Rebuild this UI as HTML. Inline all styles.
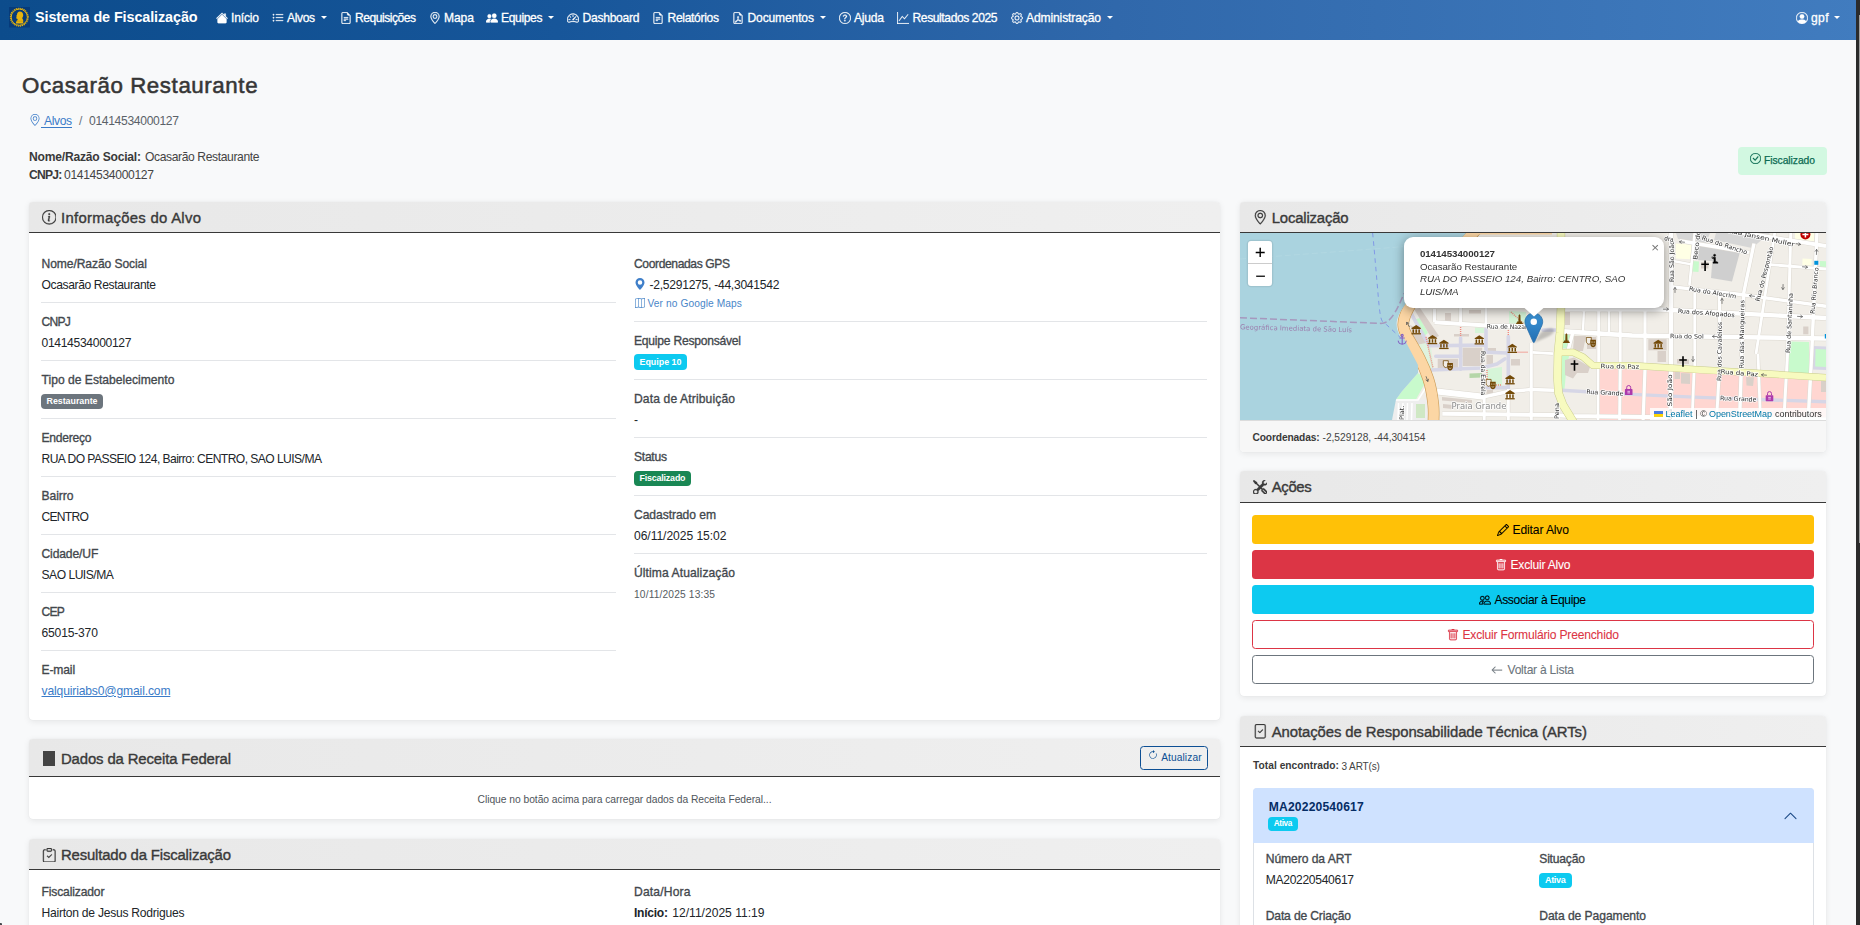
<!DOCTYPE html>
<html lang="pt-BR">
<head>
<meta charset="utf-8">
<meta name="viewport" content="width=device-width, initial-scale=1">
<title>Ocasarão Restaurante - Sistema de Fiscalização</title>
<style>

*{box-sizing:border-box}
html,body{margin:0;padding:0}
body{position:relative;width:1860px;height:925px;overflow:hidden;background:#f8f9fa;
  font-family:"Liberation Sans",sans-serif;font-size:12px;color:#212529}
.a{position:absolute;display:block}
.t{white-space:pre;margin:0;padding:0;font-weight:400}
a{color:#3a7bc8}
.navbar{left:0;top:0;width:1860px;height:39.5px;background:linear-gradient(90deg,#0c4c8c 0%,#17569a 30%,#3068ab 60%,#417cbf 100%);color:#fff}
.navbar .t{color:#fff;text-decoration:none}
.caret{width:0;height:0;border-left:3.4px solid transparent;border-right:3.4px solid transparent;border-top:3.6px solid #fff}
main{left:0;top:0;width:1856px;height:925px}
.card{background:#fff;border-radius:4px;box-shadow:0 1.5px 6px rgba(0,0,0,.075),0 0 1px rgba(0,0,0,.10);overflow:hidden}
.card-header{left:0;top:0;width:100%;background:linear-gradient(90deg,#e8e8e8,#efefef);border-bottom:1px solid #383838}
.sep{height:1px;background:#e3e5e8}
.badge{border-radius:4px;color:#fff}
.lbl{color:#43484d}
.sb1{-webkit-text-stroke:.33px currentColor}
.sbn{-webkit-text-stroke:.28px currentColor}
.sbb{-webkit-text-stroke:.08px currentColor}
.sb2{-webkit-text-stroke:.38px currentColor}
.sb3{-webkit-text-stroke:.55px currentColor}
.btn{border-radius:3.5px}
.scrollbar{left:1856px;top:0;width:4px;height:925px;background:#2b2b2b}
.thumb{left:1859px;top:15px;width:1px;height:528px;background:#9f9f9f}

</style>
</head>
<body>
<nav class="a navbar">
<svg class="a" style="left:9.2px;top:7.3px;width:21px;height:20.5px" viewBox="0 0 21 20.5" aria-hidden="true"><rect width="21" height="20.5" fill="#063b7b"/><circle cx="10.3" cy="10.2" r="8.9" fill="none" stroke="#e6b40e" stroke-width="1.1" stroke-dasharray="1.25 0.75"/><circle cx="10.3" cy="10.2" r="8.1" fill="none" stroke="#e6b40e" stroke-width="1"/><path d="M10.8 4.500c2.200 0 3.400 1.600 3.400 3.600 0 1.400-.5 2.300-1 3 .2.900.6 1.400 1 2v3.500H7c-.2-1.600.6-3 1.800-3.600-.3-.5-.5-.9-.6-1.300-.6 0-1-.4-.9-1l.3-1.200c-.3-.3-.3-.6-.1-.9l.5-.8c0-2 1.200-3.300 2.800-3.300z" fill="#e6b40e"/><path d="M7 14.200h7.200" stroke="#b88c06" stroke-width=".5"/></svg>
<a class="a t brand" href="#" style="left:35px;top:6.01px;font-size:14.4px;line-height:22px;font-weight:700;letter-spacing:-0.1px;">Sistema de Fiscalização</a>
<svg class="a ic" style="left:215.5px;top:12px;width:12px;height:12px;fill:#fff;stroke:#fff;stroke-width:.35" viewBox="0 0 16 16" aria-hidden="true"><path d="M8.707 1.5a1 1 0 0 0-1.414 0L.646 8.146a.5.5 0 0 0 .708.708L8 2.207l6.646 6.647a.5.5 0 0 0 .708-.708L13 5.793V2.5a.5.5 0 0 0-.5-.5h-1a.5.5 0 0 0-.5.5v1.293z"/><path d="m8 3.293 6 6V13.5a1.5 1.5 0 0 1-1.5 1.5h-9A1.5 1.5 0 0 1 2 13.5V9.293z"/></svg>
<a class="a t sbn" href="#" style="left:231px;top:8.81px;font-size:12.1px;line-height:18px;letter-spacing:-0.18px;">Início</a>
<svg class="a ic" style="left:271.5px;top:12px;width:12px;height:12px;fill:#fff;stroke:#fff;stroke-width:.35" viewBox="0 0 16 16" aria-hidden="true"><path fill-rule="evenodd" d="M5 11.5a.5.5 0 0 1 .5-.5h9a.5.5 0 0 1 0 1h-9a.5.5 0 0 1-.5-.5m0-4a.5.5 0 0 1 .5-.5h9a.5.5 0 0 1 0 1h-9a.5.5 0 0 1-.5-.5m0-4a.5.5 0 0 1 .5-.5h9a.5.5 0 0 1 0 1h-9a.5.5 0 0 1-.5-.5m-3 1a1 1 0 1 0 0-2 1 1 0 0 0 0 2m0 4a1 1 0 1 0 0-2 1 1 0 0 0 0 2m0 4a1 1 0 1 0 0-2 1 1 0 0 0 0 2"/></svg>
<a class="a t sbn" href="#" style="left:287px;top:8.81px;font-size:12.1px;line-height:18px;letter-spacing:-0.39px;">Alvos</a>
<span class="a caret" style="left:320.6px;top:15.8px;width:0px;height:0px;"></span>
<svg class="a ic" style="left:339.5px;top:12px;width:12px;height:12px;fill:#fff;stroke:#fff;stroke-width:.35" viewBox="0 0 16 16" aria-hidden="true"><path d="M5.5 7a.5.5 0 0 0 0 1h5a.5.5 0 0 0 0-1zM5 9.5a.5.5 0 0 1 .5-.5h5a.5.5 0 0 1 0 1h-5a.5.5 0 0 1-.5-.5m0 2a.5.5 0 0 1 .5-.5h2a.5.5 0 0 1 0 1h-2a.5.5 0 0 1-.5-.5"/><path d="M9.5 0H4a2 2 0 0 0-2 2v12a2 2 0 0 0 2 2h8a2 2 0 0 0 2-2V4.5zm0 1v2A1.5 1.5 0 0 0 11 4.5h2V14a1 1 0 0 1-1 1H4a1 1 0 0 1-1-1V2a1 1 0 0 1 1-1z"/></svg>
<a class="a t sbn" href="#" style="left:355px;top:8.81px;font-size:12.1px;line-height:18px;letter-spacing:-0.49px;">Requisições</a>
<svg class="a ic" style="left:428.5px;top:12px;width:12px;height:12px;fill:#fff;stroke:#fff;stroke-width:.35" viewBox="0 0 16 16" aria-hidden="true"><path d="M12.166 8.94c-.524 1.062-1.234 2.12-1.96 3.07A32 32 0 0 1 8 14.58a32 32 0 0 1-2.206-2.57c-.726-.95-1.436-2.008-1.96-3.07C3.304 7.867 3 6.862 3 6a5 5 0 0 1 10 0c0 .862-.305 1.867-.834 2.94M8 16s6-5.686 6-10A6 6 0 0 0 2 6c0 4.314 6 10 6 10"/><path d="M8 8a2 2 0 1 1 0-4 2 2 0 0 1 0 4m0 1a3 3 0 1 0 0-6 3 3 0 0 0 0 6"/></svg>
<a class="a t sbn" href="#" style="left:444px;top:8.81px;font-size:12.1px;line-height:18px;letter-spacing:-0.09px;">Mapa</a>
<svg class="a ic" style="left:485.5px;top:12px;width:12px;height:12px;fill:#fff;stroke:#fff;stroke-width:.35" viewBox="0 0 16 16" aria-hidden="true"><path d="M7 14s-1 0-1-1 1-4 5-4 5 3 5 4-1 1-1 1zm4-6a3 3 0 1 0 0-6 3 3 0 0 0 0 6m-5.784 6A2.24 2.24 0 0 1 5 13c0-1.355.68-2.75 1.936-3.72A6.3 6.3 0 0 0 5 9c-4 0-5 3-5 4s1 1 1 1zM4.5 8a2.5 2.5 0 1 0 0-5 2.5 2.5 0 0 0 0 5"/></svg>
<a class="a t sbn" href="#" style="left:501px;top:8.81px;font-size:12.1px;line-height:18px;letter-spacing:-0.37px;">Equipes</a>
<span class="a caret" style="left:548.1px;top:15.8px;width:0px;height:0px;"></span>
<svg class="a ic" style="left:567px;top:12px;width:12px;height:12px;fill:#fff;stroke:#fff;stroke-width:.35" viewBox="0 0 16 16" aria-hidden="true"><path d="M8 4a.5.5 0 0 1 .5.5V6a.5.5 0 0 1-1 0V4.5A.5.5 0 0 1 8 4M3.732 5.732a.5.5 0 0 1 .707 0l.915.914a.5.5 0 1 1-.708.708l-.914-.915a.5.5 0 0 1 0-.707M2 10a.5.5 0 0 1 .5-.5h1.586a.5.5 0 0 1 0 1H2.5A.5.5 0 0 1 2 10m9.5 0a.5.5 0 0 1 .5-.5h1.5a.5.5 0 0 1 0 1H12a.5.5 0 0 1-.5-.5m.754-4.246a.39.39 0 0 0-.527-.02L7.547 9.31a.91.91 0 1 0 1.302 1.258l3.434-4.297a.39.39 0 0 0-.029-.518z"/><path fill-rule="evenodd" d="M0 10a8 8 0 1 1 15.547 2.661c-.442 1.253-1.845 1.602-2.932 1.25C11.309 13.488 9.475 13 8 13c-1.474 0-3.31.488-4.615.911-1.087.352-2.49.003-2.932-1.25A8 8 0 0 1 0 10m8-7a7 7 0 0 0-6.603 9.329c.203.575.923.876 1.68.63C4.397 12.533 6.358 12 8 12s3.604.532 4.923.96c.757.245 1.477-.056 1.68-.631A7 7 0 0 0 8 3"/></svg>
<a class="a t sbn" href="#" style="left:582.5px;top:8.81px;font-size:12.1px;line-height:18px;letter-spacing:-0.27px;">Dashboard</a>
<svg class="a ic" style="left:652px;top:12px;width:12px;height:12px;fill:#fff;stroke:#fff;stroke-width:.35" viewBox="0 0 16 16" aria-hidden="true"><path d="M5.5 7a.5.5 0 0 0 0 1h5a.5.5 0 0 0 0-1zM5 9.5a.5.5 0 0 1 .5-.5h5a.5.5 0 0 1 0 1h-5a.5.5 0 0 1-.5-.5m0 2a.5.5 0 0 1 .5-.5h2a.5.5 0 0 1 0 1h-2a.5.5 0 0 1-.5-.5"/><path d="M9.5 0H4a2 2 0 0 0-2 2v12a2 2 0 0 0 2 2h8a2 2 0 0 0 2-2V4.5zm0 1v2A1.5 1.5 0 0 0 11 4.5h2V14a1 1 0 0 1-1 1H4a1 1 0 0 1-1-1V2a1 1 0 0 1 1-1z"/></svg>
<a class="a t sbn" href="#" style="left:667.5px;top:8.81px;font-size:12.1px;line-height:18px;letter-spacing:-0.33px;">Relatórios</a>
<svg class="a ic" style="left:732px;top:12px;width:12px;height:12px;fill:#fff;stroke:#fff;stroke-width:.35" viewBox="0 0 16 16" aria-hidden="true"><path d="M14 14V4.5L9.5 0H4a2 2 0 0 0-2 2v12a2 2 0 0 0 2 2h8a2 2 0 0 0 2-2M9.5 3A1.5 1.5 0 0 0 11 4.5h2V14a1 1 0 0 1-1 1H4a1 1 0 0 1-1-1V2a1 1 0 0 1 1-1h5.5z"/><path d="M4.6 14.1a.8.8 0 0 1-.44-.42c-.2-.39-.13-.78.08-1.1.2-.31.53-.57.9-.79a7.7 7.7 0 0 1 1.48-.65 20 20 0 0 0 1.06-2.22 7.3 7.3 0 0 1-.43-1.3c-.09-.4-.12-.8-.05-1.14.08-.35.28-.67.65-.82.2-.08.4-.12.6-.08a.7.7 0 0 1 .48.37c.09.16.12.36.13.54 0 .19-.01.4-.05.61-.08.51-.27 1.13-.52 1.8a11 11 0 0 0 .98 1.68 5.8 5.8 0 0 1 1.33.05c.37.07.74.2.96.47.12.14.2.32.2.52 0 .19-.05.38-.14.56a1 1 0 0 1-.35.42.9.9 0 0 1-.51.14c-.33-.02-.65-.2-.93-.42a5.7 5.7 0 0 1-.91-.95 11.7 11.7 0 0 0-2 .4 11.3 11.3 0 0 1-1.02 1.52c-.3.35-.61.65-.93.78a.8.8 0 0 1-.58.03m1.38-2.35c-.17.08-.32.16-.46.24-.33.2-.54.38-.65.55-.1.15-.1.25-.04.36l.03.05.06-.02c.14-.06.36-.24.64-.57a8 8 0 0 0 .42-.61m1.64-1.33a13 13 0 0 1 1.01-.19 10 10 0 0 1-.51-.86 21 21 0 0 1-.5 1.05m2.45.45c.15.16.3.3.43.4.25.2.42.26.51.27a.1.1 0 0 0 .07-.02.3.3 0 0 0 .1-.12.6.6 0 0 0 .06-.2.1.1 0 0 0-.03-.06c-.05-.06-.2-.15-.5-.2a4 4 0 0 0-.64-.07M8.08 7.85c.13-.43.22-.8.27-1.1.03-.2.04-.35.04-.47a.6.6 0 0 0-.03-.2.5.5 0 0 0-.15.04c-.09.03-.16.1-.19.27-.04.18-.03.43.04.75.02.1.05.2.02.71"/></svg>
<a class="a t sbn" href="#" style="left:747.5px;top:8.81px;font-size:12.1px;line-height:18px;letter-spacing:-0.16px;">Documentos</a>
<span class="a caret" style="left:819.6px;top:15.8px;width:0px;height:0px;"></span>
<svg class="a ic" style="left:838.5px;top:12px;width:12px;height:12px;fill:#fff;stroke:#fff;stroke-width:.35" viewBox="0 0 16 16" aria-hidden="true"><path d="M8 15A7 7 0 1 1 8 1a7 7 0 0 1 0 14m0 1A8 8 0 1 0 8 0a8 8 0 0 0 0 16"/><path d="M5.255 5.786a.237.237 0 0 0 .241.247h.825c.138 0 .248-.113.266-.25.09-.656.54-1.134 1.342-1.134.686 0 1.314.343 1.314 1.168 0 .635-.374.927-.965 1.371-.673.489-1.206 1.06-1.168 1.987l.003.217a.25.25 0 0 0 .25.246h.811a.25.25 0 0 0 .25-.25v-.105c0-.718.273-.927 1.01-1.486.609-.463 1.244-.977 1.244-2.056 0-1.511-1.276-2.241-2.673-2.241-1.267 0-2.655.59-2.75 2.286m1.557 5.763c0 .533.425.927 1.01.927.609 0 1.028-.394 1.028-.927 0-.552-.42-.94-1.029-.94-.584 0-1.009.388-1.009.94"/></svg>
<a class="a t sbn" href="#" style="left:854px;top:8.81px;font-size:12.1px;line-height:18px;letter-spacing:-0.23px;">Ajuda</a>
<svg class="a ic" style="left:897px;top:12px;width:12px;height:12px;fill:#fff;stroke:#fff;stroke-width:.35" viewBox="0 0 16 16" aria-hidden="true"><path fill-rule="evenodd" d="M0 0h1v15h15v1H0zm14.817 3.113a.5.5 0 0 1 .07.704l-4.5 5.5a.5.5 0 0 1-.74.037L7.06 6.767l-3.656 5.027a.5.5 0 0 1-.808-.588l4-5.5a.5.5 0 0 1 .758-.06l2.609 2.61 4.15-5.073a.5.5 0 0 1 .704-.07"/></svg>
<a class="a t sbn" href="#" style="left:912.5px;top:8.81px;font-size:12.1px;line-height:18px;letter-spacing:-0.41px;">Resultados 2025</a>
<svg class="a ic" style="left:1010.5px;top:12px;width:12px;height:12px;fill:#fff;stroke:#fff;stroke-width:.35" viewBox="0 0 16 16" aria-hidden="true"><path d="M8 4.754a3.246 3.246 0 1 0 0 6.492 3.246 3.246 0 0 0 0-6.492M5.754 8a2.246 2.246 0 1 1 4.492 0 2.246 2.246 0 0 1-4.492 0"/><path d="M9.796 1.343c-.527-1.79-3.065-1.79-3.592 0l-.094.319a.873.873 0 0 1-1.255.52l-.292-.16c-1.64-.892-3.433.902-2.54 2.541l.159.292a.873.873 0 0 1-.52 1.255l-.319.094c-1.79.527-1.79 3.065 0 3.592l.319.094a.873.873 0 0 1 .52 1.255l-.16.292c-.892 1.64.901 3.434 2.541 2.54l.292-.159a.873.873 0 0 1 1.255.52l.094.319c.527 1.79 3.065 1.79 3.592 0l.094-.319a.873.873 0 0 1 1.255-.52l.292.16c1.64.893 3.434-.902 2.54-2.541l-.159-.292a.873.873 0 0 1 .52-1.255l.319-.094c1.79-.527 1.79-3.065 0-3.592l-.319-.094a.873.873 0 0 1-.52-1.255l.16-.292c.893-1.64-.902-3.433-2.541-2.54l-.292.159a.873.873 0 0 1-1.255-.52zm-2.633.283c.246-.835 1.428-.835 1.674 0l.094.319a1.873 1.873 0 0 0 2.693 1.115l.291-.16c.764-.415 1.6.42 1.184 1.185l-.159.292a1.873 1.873 0 0 0 1.116 2.692l.318.094c.835.246.835 1.428 0 1.674l-.319.094a1.873 1.873 0 0 0-1.115 2.693l.16.291c.415.764-.42 1.6-1.185 1.184l-.291-.159a1.873 1.873 0 0 0-2.693 1.116l-.094.318c-.246.835-1.428.835-1.674 0l-.094-.319a1.873 1.873 0 0 0-2.692-1.115l-.292.16c-.764.415-1.6-.42-1.184-1.185l.159-.291A1.873 1.873 0 0 0 1.945 8.93l-.319-.094c-.835-.246-.835-1.428 0-1.674l.319-.094A1.873 1.873 0 0 0 3.06 4.377l-.16-.292c-.415-.764.42-1.6 1.185-1.184l.292.159a1.873 1.873 0 0 0 2.692-1.115z"/></svg>
<a class="a t sbn" href="#" style="left:1026px;top:8.81px;font-size:12.1px;line-height:18px;letter-spacing:-0.14px;">Administração</a>
<span class="a caret" style="left:1106.6px;top:15.8px;width:0px;height:0px;"></span>
<svg class="a ic" style="left:1795.5px;top:12px;width:12px;height:12px;fill:#fff;stroke:#fff;stroke-width:.35" viewBox="0 0 16 16" aria-hidden="true"><path d="M11 6a3 3 0 1 1-6 0 3 3 0 0 1 6 0"/><path fill-rule="evenodd" d="M0 8a8 8 0 1 1 16 0A8 8 0 0 1 0 8m8-7a7 7 0 0 0-5.468 11.37C3.242 11.226 4.805 10 8 10s4.757 1.225 5.468 2.37A7 7 0 0 0 8 1"/></svg>
<a class="a t sbn" href="#" style="left:1811px;top:8.81px;font-size:12.1px;line-height:18px;letter-spacing:0.39px;">gpf</a>
<span class="a caret" style="left:1834.2px;top:15.8px;width:0px;height:0px;"></span>
</nav>
<main class="a">
<h1 class="a t sb3" style="left:22px;top:71.37px;font-size:22.3px;line-height:30px;letter-spacing:0.59px;color:#363636;">Ocasarão Restaurante</h1>
<nav class="a" style="left:0;top:0" aria-label="breadcrumb">
<svg class="a ic" style="left:28.5px;top:113.5px;width:12px;height:12px;fill:#3a7bc8;" viewBox="0 0 16 16" aria-hidden="true"><path d="M12.166 8.94c-.524 1.062-1.234 2.12-1.96 3.07A32 32 0 0 1 8 14.58a32 32 0 0 1-2.206-2.57c-.726-.95-1.436-2.008-1.96-3.07C3.304 7.867 3 6.862 3 6a5 5 0 0 1 10 0c0 .862-.305 1.867-.834 2.94M8 16s6-5.686 6-10A6 6 0 0 0 2 6c0 4.314 6 10 6 10"/><path d="M8 8a2 2 0 1 1 0-4 2 2 0 0 1 0 4m0 1a3 3 0 1 0 0-6 3 3 0 0 0 0 6"/></svg>
<a class="a t" href="#" style="left:44px;top:111.81px;font-size:12.1px;line-height:18px;letter-spacing:-0.39px;color:#3a7bc8;text-decoration:none">Alvos</a>
<div class="a " style="left:40.5px;top:126.6px;width:31.5px;height:1px;background:#3a7bc8"></div>
<span class="a t" style="left:79px;top:111.81px;font-size:12.1px;line-height:18px;color:#6c757d;">/</span>
<span class="a t" style="left:89px;top:111.81px;font-size:12.1px;line-height:18px;letter-spacing:-0.32px;color:#5b6268;">01414534000127</span>
</nav>
<span class="a t" style="left:29px;top:147.81px;font-size:12.1px;line-height:18px;font-weight:700;letter-spacing:-0.21px;color:#3a3a3a;">Nome/Razão Social:</span>
<span class="a t" style="left:145px;top:147.81px;font-size:12.1px;line-height:18px;letter-spacing:-0.38px;color:#444;">Ocasarão Restaurante</span>
<span class="a t" style="left:29px;top:165.81px;font-size:12.1px;line-height:18px;font-weight:700;letter-spacing:-0.75px;color:#3a3a3a;">CNPJ:</span>
<span class="a t" style="left:64px;top:165.81px;font-size:12.1px;line-height:18px;letter-spacing:-0.32px;color:#444;">01414534000127</span>
<div class="a " style="left:1738px;top:147px;width:89px;height:28px;background:#d2f8e1;border-radius:4px"></div>
<svg class="a ic" style="left:1750px;top:153.4px;width:11px;height:11px;fill:#0b6b52;stroke:#0b6b52;stroke-width:.3" viewBox="0 0 16 16" aria-hidden="true"><path d="M8 15A7 7 0 1 1 8 1a7 7 0 0 1 0 14m0 1A8 8 0 1 0 8 0a8 8 0 0 0 0 16"/><path d="m10.97 4.97-.02.022-3.473 4.425-2.093-2.094a.75.75 0 0 0-1.06 1.06L6.97 11.03a.75.75 0 0 0 1.079-.02l3.992-4.99a.75.75 0 0 0-1.071-1.05"/></svg>
<span class="a t" style="left:1764px;top:152.63px;font-size:10.3px;line-height:15px;letter-spacing:-0.05px;color:#0b6b52;-webkit-text-stroke:.25px #0b6b52">Fiscalizado</span>
<section class="a card" style="left:29px;top:201.5px;width:1191px;height:518.5px">
<div class="a card-header" style="height:31.5px"></div>
<svg class="a ic" style="left:12.5px;top:8.5px;width:14.5px;height:14.5px;fill:#3a3a3a;stroke:#3a3a3a;stroke-width:.3" viewBox="0 0 16 16" aria-hidden="true"><path d="M8 15A7 7 0 1 1 8 1a7 7 0 0 1 0 14m0 1A8 8 0 1 0 8 0a8 8 0 0 0 0 16"/><path d="m8.93 6.588-2.29.287-.082.38.45.083c.294.07.352.176.288.469l-.738 3.468c-.194.897.105 1.319.808 1.319.545 0 1.178-.252 1.465-.598l.088-.416c-.2.176-.492.246-.686.246-.275 0-.375-.193-.304-.533zM9 4.5a1 1 0 1 1-2 0 1 1 0 0 1 2 0"/></svg>
<h5 class="a t sb2" style="left:32px;top:6.34px;font-size:14.9px;line-height:20px;letter-spacing:0.28px;color:#3a3a3a;">Informações do Alvo</h5>
<span class="a t lbl sb1" style="left:12.5px;top:53.31px;font-size:12.1px;line-height:18px;letter-spacing:-0.09px;">Nome/Razão Social</span>
<span class="a t" style="left:12.5px;top:74.31px;font-size:12.1px;line-height:18px;letter-spacing:-0.38px;">Ocasarão Restaurante</span>
<div class="a sep" style="left:12px;top:100.5px;width:575px;height:1px;"></div>
<span class="a t lbl sb1" style="left:12.5px;top:111.31px;font-size:12.1px;line-height:18px;letter-spacing:-0.75px;">CNPJ</span>
<span class="a t" style="left:12.5px;top:132.31px;font-size:12.1px;line-height:18px;letter-spacing:-0.32px;">01414534000127</span>
<div class="a sep" style="left:12px;top:158.5px;width:575px;height:1px;"></div>
<span class="a t lbl sb1" style="left:12.5px;top:169.31px;font-size:12.1px;line-height:18px;letter-spacing:0.01px;">Tipo de Estabelecimento</span>
<span class="a badge" style="left:12px;top:192.7px;width:62px;height:14.8px;background:#6c757d"></span><span class="a t" style="left:17.5px;top:192.72px;font-size:8.9px;line-height:15px;font-weight:700;letter-spacing:-0.03px;color:#fff;">Restaurante</span>
<div class="a sep" style="left:12px;top:216.5px;width:575px;height:1px;"></div>
<span class="a t lbl sb1" style="left:12.5px;top:227.31px;font-size:12.1px;line-height:18px;letter-spacing:-0.25px;">Endereço</span>
<span class="a t" style="left:12.5px;top:248.31px;font-size:12.1px;line-height:18px;letter-spacing:-0.56px;">RUA DO PASSEIO 124, Bairro: CENTRO, SAO LUIS/MA</span>
<div class="a sep" style="left:12px;top:274.5px;width:575px;height:1px;"></div>
<span class="a t lbl sb1" style="left:12.5px;top:285.31px;font-size:12.1px;line-height:18px;letter-spacing:-0.05px;">Bairro</span>
<span class="a t" style="left:12.5px;top:306.31px;font-size:12.1px;line-height:18px;letter-spacing:-0.75px;">CENTRO</span>
<div class="a sep" style="left:12px;top:332.5px;width:575px;height:1px;"></div>
<span class="a t lbl sb1" style="left:12.5px;top:343.31px;font-size:12.1px;line-height:18px;letter-spacing:-0.13px;">Cidade/UF</span>
<span class="a t" style="left:12.5px;top:364.31px;font-size:12.1px;line-height:18px;letter-spacing:-0.5px;">SAO LUIS/MA</span>
<div class="a sep" style="left:12px;top:390.5px;width:575px;height:1px;"></div>
<span class="a t lbl sb1" style="left:12.5px;top:401.31px;font-size:12.1px;line-height:18px;letter-spacing:-0.75px;">CEP</span>
<span class="a t" style="left:12.5px;top:422.31px;font-size:12.1px;line-height:18px;letter-spacing:-0.18px;">65015-370</span>
<div class="a sep" style="left:12px;top:448.5px;width:575px;height:1px;"></div>
<span class="a t lbl sb1" style="left:12.5px;top:459.31px;font-size:12.1px;line-height:18px;letter-spacing:-0.14px;">E-mail</span>
<a class="a t" href="#" style="left:12.5px;top:480.31px;font-size:12.1px;line-height:18px;letter-spacing:-0.14px;color:#3a7bc8;text-decoration:underline">valquiriabs0@gmail.com</a>
<span class="a t lbl sb1" style="left:605px;top:53.31px;font-size:12.1px;line-height:18px;letter-spacing:-0.39px;">Coordenadas GPS</span>
<svg class="a ic" style="left:604.5px;top:76.5px;width:12px;height:12px;fill:#3f7fc9;" viewBox="0 0 16 16" aria-hidden="true"><path d="M8 16s6-5.686 6-10A6 6 0 0 0 2 6c0 4.314 6 10 6 10m0-7a3 3 0 1 1 0-6 3 3 0 0 1 0 6"/></svg>
<span class="a t" style="left:620.5px;top:74.31px;font-size:12.1px;line-height:18px;letter-spacing:-0.27px;">-2,5291275, -44,3041542</span>
<svg class="a ic" style="left:605.5px;top:96px;width:10px;height:10px;fill:#4a86c8;" viewBox="0 0 16 16" aria-hidden="true"><path fill-rule="evenodd" d="M15.817.113A.5.5 0 0 1 16 .5v14a.5.5 0 0 1-.402.49l-5 1a.5.5 0 0 1-.196 0L5.5 15.01l-4.902.98A.5.5 0 0 1 0 15.5v-14a.5.5 0 0 1 .402-.49l5-1a.5.5 0 0 1 .196 0L10.5.99l4.902-.98a.5.5 0 0 1 .415.103M10 1.91l-4-.8v12.98l4 .8zm1 12.98 4-.8V1.11l-4 .8zm-6-.8V1.11l-4 .8v12.98z"/></svg>
<a class="a t" href="#" style="left:618.5px;top:94.97px;font-size:10.2px;line-height:15px;letter-spacing:0.09px;color:#4a86c8;text-decoration:none">Ver no Google Maps</a>
<div class="a sep" style="left:605px;top:119.5px;width:573px;height:1px;"></div>
<span class="a t lbl sb1" style="left:605px;top:130.31px;font-size:12.1px;line-height:18px;letter-spacing:-0.23px;">Equipe Responsável</span>
<span class="a badge" style="left:605px;top:152.7px;width:53px;height:15.6px;background:#0dcaf0"></span><span class="a t" style="left:610.5px;top:152.62px;font-size:8.9px;line-height:16px;font-weight:700;letter-spacing:0.01px;color:#fff;">Equipe 10</span>
<div class="a sep" style="left:605px;top:177.5px;width:573px;height:1px;"></div>
<span class="a t lbl sb1" style="left:605px;top:188.31px;font-size:12.1px;line-height:18px;letter-spacing:0.13px;">Data de Atribuição</span>
<span class="a t" style="left:605px;top:209.31px;font-size:12.1px;line-height:18px;">-</span>
<div class="a sep" style="left:605px;top:235.5px;width:573px;height:1px;"></div>
<span class="a t lbl sb1" style="left:605px;top:246.31px;font-size:12.1px;line-height:18px;letter-spacing:-0.26px;">Status</span>
<span class="a badge" style="left:605px;top:269.5px;width:57px;height:15px;background:#198754"></span><span class="a t" style="left:610.5px;top:269.62px;font-size:8.9px;line-height:15px;font-weight:700;letter-spacing:-0.18px;color:#fff;">Fiscalizado</span>
<div class="a sep" style="left:605px;top:293.5px;width:573px;height:1px;"></div>
<span class="a t lbl sb1" style="left:605px;top:304.31px;font-size:12.1px;line-height:18px;letter-spacing:-0.06px;">Cadastrado em</span>
<span class="a t" style="left:605px;top:325.31px;font-size:12.1px;line-height:18px;letter-spacing:-0.05px;">06/11/2025 15:02</span>
<div class="a sep" style="left:605px;top:351.5px;width:573px;height:1px;"></div>
<span class="a t lbl sb1" style="left:605px;top:362.31px;font-size:12.1px;line-height:18px;letter-spacing:0.09px;">Última Atualização</span>
<span class="a t" style="left:605px;top:385.47px;font-size:10.2px;line-height:15px;letter-spacing:0.16px;color:#555b61;">10/11/2025 13:35</span>
</section>
<section class="a card" style="left:29px;top:739.4px;width:1191px;height:79.4px">
<div class="a card-header" style="height:37.6px"></div>
<div class="a " style="left:14px;top:11.6px;width:12px;height:15px;background:#444"></div>
<h5 class="a t sb2" style="left:32px;top:9.44px;font-size:14.9px;line-height:20px;letter-spacing:-0.13px;color:#3a3a3a;">Dados da Receita Federal</h5>
<span class="a btn" style="left:1111px;top:6.6px;width:68px;height:24px;border:1px solid #0d4f94"></span>
<svg class="a ic" style="left:1119px;top:11.1px;width:10px;height:10px;fill:#0d4f94;" viewBox="0 0 16 16" aria-hidden="true"><path fill-rule="evenodd" d="M8 3a5 5 0 1 0 4.546 2.914.5.5 0 0 1 .908-.417A6 6 0 1 1 8 2z"/><path d="M8 4.466V.534a.25.25 0 0 1 .41-.192l2.36 1.966c.12.1.12.284 0 .384L8.410 4.658A.25.25 0 0 1 8 4.466"/></svg>
<span class="a t" style="left:1132.2px;top:10.27px;font-size:10.2px;line-height:15px;letter-spacing:0.09px;color:#0d4f94;">Atualizar</span>
<span class="a t" style="left:448.5px;top:52.33px;font-size:10.3px;line-height:15px;letter-spacing:-0.04px;color:#4f555b;">Clique no botão acima para carregar dados da Receita Federal...</span>
</section>
<section class="a card" style="left:29px;top:838.5px;width:1191px;height:120px">
<div class="a card-header" style="height:31.5px"></div>
<svg class="a ic" style="left:12.5px;top:9px;width:14.5px;height:14.5px;fill:#3a3a3a;stroke:#3a3a3a;stroke-width:.3" viewBox="0 0 16 16" aria-hidden="true"><path fill-rule="evenodd" d="M10.854 7.146a.5.5 0 0 1 0 .708l-3 3a.5.5 0 0 1-.708 0l-1.5-1.5a.5.5 0 1 1 .708-.708L7.5 9.793l2.646-2.647a.5.5 0 0 1 .708 0"/><path d="M4 1.5H3a2 2 0 0 0-2 2V14a2 2 0 0 0 2 2h10a2 2 0 0 0 2-2V3.5a2 2 0 0 0-2-2h-1v1h1a1 1 0 0 1 1 1V14a1 1 0 0 1-1 1H3a1 1 0 0 1-1-1V3.5a1 1 0 0 1 1-1h1z"/><path d="M9.5 1a.5.5 0 0 1 .5.5v1a.5.5 0 0 1-.5.5h-3a.5.5 0 0 1-.5-.5v-1a.5.5 0 0 1 .5-.5zm-3-1A1.5 1.5 0 0 0 5 1.5v1A1.5 1.5 0 0 0 6.500 4h3A1.5 1.5 0 0 0 11 2.5v-1A1.5 1.5 0 0 0 9.5 0z"/></svg>
<h5 class="a t sb2" style="left:32px;top:6.34px;font-size:14.9px;line-height:20px;letter-spacing:-0.16px;color:#3a3a3a;">Resultado da Fiscalização</h5>
<span class="a t lbl sb1" style="left:12.5px;top:44.31px;font-size:12.1px;line-height:18px;letter-spacing:-0.14px;">Fiscalizador</span>
<span class="a t" style="left:12.5px;top:65.31px;font-size:12.1px;line-height:18px;letter-spacing:-0.25px;">Hairton de Jesus Rodrigues</span>
<span class="a t lbl sb1" style="left:605px;top:44.31px;font-size:12.1px;line-height:18px;letter-spacing:0.17px;">Data/Hora</span>
<span class="a t" style="left:605px;top:65.31px;font-size:12.1px;line-height:18px;font-weight:700;letter-spacing:-0.27px;">Início:</span>
<span class="a t" style="left:643.3px;top:65.31px;font-size:12.1px;line-height:18px;letter-spacing:-0.01px;">12/11/2025 11:19</span>
</section>
<section class="a card" style="left:1240px;top:201.5px;width:586px;height:250.5px">
<div class="a card-header" style="height:31.5px"></div>
<svg class="a ic" style="left:12.5px;top:8.5px;width:14.5px;height:14.5px;fill:#3a3a3a;stroke:#3a3a3a;stroke-width:.3" viewBox="0 0 16 16" aria-hidden="true"><path d="M12.166 8.94c-.524 1.062-1.234 2.12-1.96 3.07A32 32 0 0 1 8 14.58a32 32 0 0 1-2.206-2.57c-.726-.95-1.436-2.008-1.96-3.07C3.304 7.867 3 6.862 3 6a5 5 0 0 1 10 0c0 .862-.305 1.867-.834 2.94M8 16s6-5.686 6-10A6 6 0 0 0 2 6c0 4.314 6 10 6 10"/><path d="M8 8a2 2 0 1 1 0-4 2 2 0 0 1 0 4m0 1a3 3 0 1 0 0-6 3 3 0 0 0 0 6"/></svg>
<h5 class="a t sb2" style="left:31.7px;top:6.34px;font-size:14.9px;line-height:20px;letter-spacing:-0.17px;color:#3a3a3a;">Localização</h5>
<div class="a map" style="left:0px;top:31.5px;width:586px;height:187px;overflow:hidden;background:#aad3df;opacity:.999"><svg class="a" style="left:0;top:0" width="586" height="187" viewBox="0 0 586 187" aria-label="Mapa"><rect width="586" height="187" fill="#f1eee8"/><polygon points="358.0,134.0 392.0,136.5 460.0,139.0 520.0,143.0 586.0,148.5 586.0,187.0 358.0,187.0" fill="#ffd6d1" /><polygon points="548.8,108.5 569.0,109.0 569.0,140.5 548.5,139.0" fill="#c8facc" /><polygon points="573.0,113.0 586.0,113.5 586.0,137.0 572.5,136.5" fill="#d6d6e6" /><polygon points="575.5,116.0 586.0,116.5 586.0,134.0 575.2,133.5" fill="#c8facc" /><polygon points="455.3,11.8 499.8,19.6 492.0,48.4 471.0,45.1 472.3,28.1 453.3,26.8" fill="#cfcfcf" /><polygon points="436.0,0.0 470.0,0.0 466.0,10.0 438.0,6.0" fill="#d6d6d6" /><polygon points="476.0,0.0 530.0,0.0 512.0,15.0 474.0,7.0" fill="#d6d6d6" /><polygon points="435.7,10.5 451.4,11.5 451.0,26.2 435.7,25.5" fill="#ffffe5" /><polygon points="555.0,0.0 574.0,0.0 574.0,8.0 555.0,7.0" fill="#ffffe5" /><polygon points="562.5,25.5 571.7,26.0 571.5,32.7 562.3,32.2" fill="#ffffe5" /><polygon points="452.0,28.0 459.0,28.5 458.5,39.0 451.5,38.5" fill="#c8facc" /><polygon points="580.0,28.0 586.0,28.3 586.0,34.0 580.0,33.7" fill="#c8facc" /><polygon points="321.4,101.0 331.8,102.0 329.0,115.4 320.5,115.0" fill="#c8facc" /><polygon points="321.5,122.0 329.0,123.0 326.0,140.0 324.5,156.0 320.5,156.0 320.0,138.0" fill="#c8facc" /><polygon points="178.0,140.0 161.8,158.5 156.0,166.4 176.0,166.4 184.6,150.7 181.4,143.0" fill="#c8facc" /><polygon points="173.0,87.0 180.0,85.0 188.0,100.0 183.0,104.0" fill="#c8facc" /><polygon points="176.5,104.0 190.0,106.0 194.0,137.0 186.0,138.0" fill="#dff3df" /><polygon points="247.0,136.0 262.0,134.0 262.0,153.0 247.0,153.0" fill="#d6f5d8" /><polygon points="229.5,140.5 242.0,140.0 242.0,144.5 229.5,145.0" fill="#b5d6a8" /><polygon points="235.0,94.5 244.0,94.5 244.0,100.0 235.0,100.0" fill="#d6f5d8" /><polygon points="269.0,78.0 286.0,79.0 286.0,92.0 269.0,91.0" fill="#d6f5d8" /><polygon points="156.0,166.4 152.0,187.0 188.0,187.0 187.0,166.4" fill="#eeeeee" /><polyline points="158.5,170.0 158.0,187.0" fill="none" stroke="#fff" stroke-width="1.5" stroke-linecap="butt" stroke-linejoin="round" /><polyline points="163.0,170.0 162.5,187.0" fill="none" stroke="#fff" stroke-width="1.5" stroke-linecap="butt" stroke-linejoin="round" /><polyline points="167.5,170.0 167.0,187.0" fill="none" stroke="#fff" stroke-width="1.5" stroke-linecap="butt" stroke-linejoin="round" /><polyline points="172.0,170.0 171.5,187.0" fill="none" stroke="#fff" stroke-width="1.5" stroke-linecap="butt" stroke-linejoin="round" /><polygon points="176.0,171.0 185.0,171.0 185.0,185.0 176.0,185.0" fill="#cfe8c4" /><polyline points="155.5,167.0 178.0,167.0 185.0,156.0" fill="none" stroke="#fff" stroke-width="1.6" stroke-linecap="round" stroke-linejoin="round" /><polygon points="222.6,114.7 242.2,114.7 242.2,133.0 222.6,133.0" fill="#d9d0c9" /><polygon points="197.7,125.8 218.0,125.8 218.0,135.0 197.7,135.0" fill="#d9d0c9" /><polygon points="174.0,76.0 180.0,75.0 199.0,103.0 192.0,106.0" fill="#d9d0c9" /><polygon points="170.0,92.0 181.0,97.0 186.0,110.0 176.0,112.0" fill="#d9d0c9" /><polygon points="205.0,80.0 211.0,80.0 211.0,88.0 205.0,88.0" fill="#d9d0c9" /><polygon points="229.0,77.0 241.0,77.0 241.0,80.5 229.0,80.5" fill="#d9d0c9" /><polygon points="214.0,101.0 229.0,101.0 229.0,103.5 214.0,103.5" fill="#d9d0c9" /><polygon points="247.5,115.0 256.0,115.0 256.0,118.0 247.5,118.0" fill="#d9d0c9" /><polygon points="246.5,122.0 253.0,122.0 253.0,131.5 246.5,131.5" fill="#d9d0c9" /><polygon points="271.0,126.0 280.0,126.0 280.0,132.5 271.0,132.5" fill="#d9d0c9" /><polygon points="246.5,157.0 253.0,157.0 253.0,162.0 246.5,162.0" fill="#d9d0c9" /><polygon points="202.0,164.0 232.0,167.0 232.0,170.0 202.0,167.5" fill="#d9d0c9" /><polygon points="203.0,171.0 213.0,172.0 213.0,176.0 203.0,175.0" fill="#d9d0c9" /><polygon points="325.0,78.0 330.0,78.0 330.0,92.0 325.0,92.0" fill="#d9d0c9" /><polygon points="334.0,103.0 346.0,103.0 343.0,118.0 333.0,118.0" fill="#d9d0c9" /><polygon points="347.0,104.0 356.0,104.0 356.0,116.0 347.0,116.0" fill="#d9d0c9" /><polygon points="325.0,127.0 334.0,124.5 350.0,134.0 348.0,140.0 337.0,140.0 333.0,145.5 325.0,142.0" fill="#d9d0c9" /><polygon points="408.3,106.2 426.6,106.2 426.6,117.3 408.3,117.3" fill="#d9d0c9" /><polygon points="417.5,118.0 426.0,118.0 426.0,129.0 417.5,129.0" fill="#d9d0c9" /><polygon points="437.0,126.0 449.0,126.5 449.0,131.0 437.0,130.5" fill="#d9d0c9" /><polygon points="434.5,139.0 440.0,139.0 440.0,146.0 434.5,146.0" fill="#d9d0c9" /><polygon points="441.0,140.0 450.0,140.5 450.0,151.0 441.0,150.5" fill="#d9d0c9" /><polygon points="461.0,29.0 468.5,29.0 468.5,35.5 461.0,35.5" fill="#d9d0c9" /><polygon points="563.2,93.5 568.4,93.5 568.4,101.3 563.2,101.3" fill="#d9d0c9" /><polygon points="506.0,144.0 514.0,144.5 513.0,153.0 506.5,152.5" fill="#d9d0c9" /><polygon points="581.0,148.0 586.0,148.0 586.0,159.0 581.0,159.0" fill="#d9d0c9" /><polyline points="171.6,81.4 189.2,112.8 244.2,112.1" fill="none" stroke="#d6d6e6" stroke-width="3.6" stroke-linecap="round" stroke-linejoin="round" /><polyline points="220.6,105.0 220.6,136.3" fill="none" stroke="#d6d6e6" stroke-width="3.6" stroke-linecap="round" stroke-linejoin="round" /><polyline points="195.8,123.2 220.6,123.2" fill="none" stroke="#d6d6e6" stroke-width="3.6" stroke-linecap="round" stroke-linejoin="round" /><polyline points="191.8,137.0 241.5,135.0 257.0,131.0 265.0,125.8" fill="none" stroke="#d6d6e6" stroke-width="3.6" stroke-linecap="round" stroke-linejoin="round" /><polyline points="246.0,95.0 246.0,119.0" fill="none" stroke="#d6d6e6" stroke-width="3.6" stroke-linecap="round" stroke-linejoin="round" /><polyline points="246.8,119.3 267.7,120.0" fill="none" stroke="#d6d6e6" stroke-width="3.6" stroke-linecap="round" stroke-linejoin="round" /><polyline points="268.3,103.6 268.3,156.0" fill="none" stroke="#d6d6e6" stroke-width="3.6" stroke-linecap="round" stroke-linejoin="round" /><polyline points="246.8,154.6 267.7,154.6" fill="none" stroke="#d6d6e6" stroke-width="3.6" stroke-linecap="round" stroke-linejoin="round" /><polyline points="303.0,97.0 317.0,97.0" fill="none" stroke="#d6d6e6" stroke-width="3.6" stroke-linecap="round" stroke-linejoin="round" /><polyline points="321.4,157.2 392.0,161.4 460.0,164.4 586.0,168.8" fill="none" stroke="#d6d6e6" stroke-width="3.4" stroke-linecap="butt" stroke-linejoin="round" /><polyline points="431.0,-2.0 431.0,121.0 430.6,190.0" fill="none" stroke="#dcd8d0" stroke-width="5.2" stroke-linecap="butt" stroke-linejoin="round" /><polyline points="454.7,0.0 449.4,52.0" fill="none" stroke="#dcd8d0" stroke-width="3.6" stroke-linecap="butt" stroke-linejoin="round" /><polyline points="454.7,60.0 454.7,134.0" fill="none" stroke="#dcd8d0" stroke-width="3.8" stroke-linecap="butt" stroke-linejoin="round" /><polyline points="454.0,140.0 452.0,190.0" fill="none" stroke="#dcd8d0" stroke-width="3.8" stroke-linecap="butt" stroke-linejoin="round" /><polyline points="479.5,61.5 479.5,136.0 476.3,190.0" fill="none" stroke="#dcd8d0" stroke-width="4.0" stroke-linecap="butt" stroke-linejoin="round" /><polyline points="514.0,10.5 503.7,60.0 501.7,121.0 499.5,190.0" fill="none" stroke="#dcd8d0" stroke-width="4.4" stroke-linecap="butt" stroke-linejoin="round" /><polyline points="535.0,-2.0 516.0,121.0" fill="none" stroke="#dcd8d0" stroke-width="3.8" stroke-linecap="butt" stroke-linejoin="round" /><polyline points="518.0,121.0 520.6,190.0" fill="none" stroke="#dcd8d0" stroke-width="3.8" stroke-linecap="butt" stroke-linejoin="round" /><polyline points="550.8,-2.0 547.5,121.0 543.7,190.0" fill="none" stroke="#dcd8d0" stroke-width="4.0" stroke-linecap="butt" stroke-linejoin="round" /><polyline points="577.0,-2.0 571.7,121.0 568.0,190.0" fill="none" stroke="#dcd8d0" stroke-width="4.4" stroke-linecap="butt" stroke-linejoin="round" /><polyline points="358.7,76.0 358.7,132.0" fill="none" stroke="#dcd8d0" stroke-width="4.0" stroke-linecap="butt" stroke-linejoin="round" /><polyline points="369.0,76.0 369.0,99.0" fill="none" stroke="#dcd8d0" stroke-width="3.4" stroke-linecap="butt" stroke-linejoin="round" /><polyline points="380.2,76.0 380.2,134.0 379.6,190.0" fill="none" stroke="#dcd8d0" stroke-width="4.0" stroke-linecap="butt" stroke-linejoin="round" /><polyline points="405.0,76.0 405.0,136.0 403.0,190.0" fill="none" stroke="#dcd8d0" stroke-width="4.2" stroke-linecap="butt" stroke-linejoin="round" /><polyline points="344.0,76.0 343.0,98.0" fill="none" stroke="#dcd8d0" stroke-width="3.4" stroke-linecap="butt" stroke-linejoin="round" /><polyline points="291.2,110.0 291.2,190.0" fill="none" stroke="#dcd8d0" stroke-width="4.2" stroke-linecap="butt" stroke-linejoin="round" /><polyline points="244.2,163.8 244.2,190.0" fill="none" stroke="#dcd8d0" stroke-width="4.0" stroke-linecap="butt" stroke-linejoin="round" /><polyline points="268.3,156.0 268.3,190.0" fill="none" stroke="#dcd8d0" stroke-width="4.0" stroke-linecap="butt" stroke-linejoin="round" /><polyline points="220.6,75.0 220.6,92.0" fill="none" stroke="#dcd8d0" stroke-width="4.0" stroke-linecap="butt" stroke-linejoin="round" /><polyline points="246.0,75.0 246.0,93.0" fill="none" stroke="#dcd8d0" stroke-width="4.0" stroke-linecap="butt" stroke-linejoin="round" /><polyline points="194.5,76.0 194.5,89.0" fill="none" stroke="#dcd8d0" stroke-width="4.0" stroke-linecap="butt" stroke-linejoin="round" /><polyline points="333.0,99.0 328.0,118.0" fill="none" stroke="#dcd8d0" stroke-width="4.4" stroke-linecap="butt" stroke-linejoin="round" /><polyline points="439.6,7.8 509.0,19.6" fill="none" stroke="#dcd8d0" stroke-width="4.6" stroke-linecap="butt" stroke-linejoin="round" /><polyline points="498.5,-1.0 586.0,13.0" fill="none" stroke="#dcd8d0" stroke-width="4.8" stroke-linecap="butt" stroke-linejoin="round" /><polyline points="433.0,28.0 451.4,31.4" fill="none" stroke="#dcd8d0" stroke-width="3.4" stroke-linecap="butt" stroke-linejoin="round" /><polyline points="527.0,31.4 586.0,36.0" fill="none" stroke="#dcd8d0" stroke-width="3.8" stroke-linecap="butt" stroke-linejoin="round" /><polyline points="430.5,53.6 501.0,61.5 586.0,73.2" fill="none" stroke="#dcd8d0" stroke-width="4.4" stroke-linecap="butt" stroke-linejoin="round" /><polyline points="324.0,76.2 420.0,76.5 586.0,85.0" fill="none" stroke="#dcd8d0" stroke-width="5.4" stroke-linecap="butt" stroke-linejoin="round" /><polyline points="322.7,98.4 392.0,102.5 586.0,105.5" fill="none" stroke="#dcd8d0" stroke-width="5.6" stroke-linecap="butt" stroke-linejoin="round" /><polyline points="194.5,89.2 246.8,92.5 284.7,93.2" fill="none" stroke="#dcd8d0" stroke-width="5.0" stroke-linecap="butt" stroke-linejoin="round" /><polyline points="292.5,119.3 313.0,120.6" fill="none" stroke="#dcd8d0" stroke-width="3.8" stroke-linecap="butt" stroke-linejoin="round" /><polyline points="290.0,156.5 314.0,157.2" fill="none" stroke="#dcd8d0" stroke-width="4.6" stroke-linecap="butt" stroke-linejoin="round" /><polyline points="197.0,158.5 244.0,163.8" fill="none" stroke="#dcd8d0" stroke-width="7.0" stroke-linecap="butt" stroke-linejoin="round" /><polyline points="244.0,163.8 268.0,158.5 291.0,156.5" fill="none" stroke="#dcd8d0" stroke-width="4.4" stroke-linecap="butt" stroke-linejoin="round" /><polyline points="202.3,180.8 313.5,182.0 330.0,183.0 586.0,186.5" fill="none" stroke="#dcd8d0" stroke-width="5.0" stroke-linecap="butt" stroke-linejoin="round" /><polyline points="358.0,136.0 358.0,187.0" fill="none" stroke="#dcd8d0" stroke-width="3.6" stroke-linecap="butt" stroke-linejoin="round" /><polyline points="431.0,-2.0 431.0,121.0 430.6,190.0" fill="none" stroke="#ffffff" stroke-width="4.2" stroke-linecap="butt" stroke-linejoin="round" /><polyline points="454.7,0.0 449.4,52.0" fill="none" stroke="#ffffff" stroke-width="2.6" stroke-linecap="butt" stroke-linejoin="round" /><polyline points="454.7,60.0 454.7,134.0" fill="none" stroke="#ffffff" stroke-width="2.8" stroke-linecap="butt" stroke-linejoin="round" /><polyline points="454.0,140.0 452.0,190.0" fill="none" stroke="#ffffff" stroke-width="2.8" stroke-linecap="butt" stroke-linejoin="round" /><polyline points="479.5,61.5 479.5,136.0 476.3,190.0" fill="none" stroke="#ffffff" stroke-width="3.0" stroke-linecap="butt" stroke-linejoin="round" /><polyline points="514.0,10.5 503.7,60.0 501.7,121.0 499.5,190.0" fill="none" stroke="#ffffff" stroke-width="3.4" stroke-linecap="butt" stroke-linejoin="round" /><polyline points="535.0,-2.0 516.0,121.0" fill="none" stroke="#ffffff" stroke-width="2.8" stroke-linecap="butt" stroke-linejoin="round" /><polyline points="518.0,121.0 520.6,190.0" fill="none" stroke="#ffffff" stroke-width="2.8" stroke-linecap="butt" stroke-linejoin="round" /><polyline points="550.8,-2.0 547.5,121.0 543.7,190.0" fill="none" stroke="#ffffff" stroke-width="3.0" stroke-linecap="butt" stroke-linejoin="round" /><polyline points="577.0,-2.0 571.7,121.0 568.0,190.0" fill="none" stroke="#ffffff" stroke-width="3.4" stroke-linecap="butt" stroke-linejoin="round" /><polyline points="358.7,76.0 358.7,132.0" fill="none" stroke="#ffffff" stroke-width="3.0" stroke-linecap="butt" stroke-linejoin="round" /><polyline points="369.0,76.0 369.0,99.0" fill="none" stroke="#ffffff" stroke-width="2.4" stroke-linecap="butt" stroke-linejoin="round" /><polyline points="380.2,76.0 380.2,134.0 379.6,190.0" fill="none" stroke="#ffffff" stroke-width="3.0" stroke-linecap="butt" stroke-linejoin="round" /><polyline points="405.0,76.0 405.0,136.0 403.0,190.0" fill="none" stroke="#ffffff" stroke-width="3.2" stroke-linecap="butt" stroke-linejoin="round" /><polyline points="344.0,76.0 343.0,98.0" fill="none" stroke="#ffffff" stroke-width="2.4" stroke-linecap="butt" stroke-linejoin="round" /><polyline points="291.2,110.0 291.2,190.0" fill="none" stroke="#ffffff" stroke-width="3.2" stroke-linecap="butt" stroke-linejoin="round" /><polyline points="244.2,163.8 244.2,190.0" fill="none" stroke="#ffffff" stroke-width="3.0" stroke-linecap="butt" stroke-linejoin="round" /><polyline points="268.3,156.0 268.3,190.0" fill="none" stroke="#ffffff" stroke-width="3.0" stroke-linecap="butt" stroke-linejoin="round" /><polyline points="220.6,75.0 220.6,92.0" fill="none" stroke="#ffffff" stroke-width="3.0" stroke-linecap="butt" stroke-linejoin="round" /><polyline points="246.0,75.0 246.0,93.0" fill="none" stroke="#ffffff" stroke-width="3.0" stroke-linecap="butt" stroke-linejoin="round" /><polyline points="194.5,76.0 194.5,89.0" fill="none" stroke="#ffffff" stroke-width="3.0" stroke-linecap="butt" stroke-linejoin="round" /><polyline points="333.0,99.0 328.0,118.0" fill="none" stroke="#ffffff" stroke-width="3.4" stroke-linecap="butt" stroke-linejoin="round" /><polyline points="439.6,7.8 509.0,19.6" fill="none" stroke="#ffffff" stroke-width="3.6" stroke-linecap="butt" stroke-linejoin="round" /><polyline points="498.5,-1.0 586.0,13.0" fill="none" stroke="#ffffff" stroke-width="3.8" stroke-linecap="butt" stroke-linejoin="round" /><polyline points="433.0,28.0 451.4,31.4" fill="none" stroke="#ffffff" stroke-width="2.4" stroke-linecap="butt" stroke-linejoin="round" /><polyline points="527.0,31.4 586.0,36.0" fill="none" stroke="#ffffff" stroke-width="2.8" stroke-linecap="butt" stroke-linejoin="round" /><polyline points="430.5,53.6 501.0,61.5 586.0,73.2" fill="none" stroke="#ffffff" stroke-width="3.4" stroke-linecap="butt" stroke-linejoin="round" /><polyline points="324.0,76.2 420.0,76.5 586.0,85.0" fill="none" stroke="#ffffff" stroke-width="4.4" stroke-linecap="butt" stroke-linejoin="round" /><polyline points="322.7,98.4 392.0,102.5 586.0,105.5" fill="none" stroke="#ffffff" stroke-width="4.6" stroke-linecap="butt" stroke-linejoin="round" /><polyline points="194.5,89.2 246.8,92.5 284.7,93.2" fill="none" stroke="#ffffff" stroke-width="4.0" stroke-linecap="butt" stroke-linejoin="round" /><polyline points="292.5,119.3 313.0,120.6" fill="none" stroke="#ffffff" stroke-width="2.8" stroke-linecap="butt" stroke-linejoin="round" /><polyline points="290.0,156.5 314.0,157.2" fill="none" stroke="#ffffff" stroke-width="3.6" stroke-linecap="butt" stroke-linejoin="round" /><polyline points="197.0,158.5 244.0,163.8" fill="none" stroke="#ffffff" stroke-width="6.0" stroke-linecap="butt" stroke-linejoin="round" /><polyline points="244.0,163.8 268.0,158.5 291.0,156.5" fill="none" stroke="#ffffff" stroke-width="3.4" stroke-linecap="butt" stroke-linejoin="round" /><polyline points="202.3,180.8 313.5,182.0 330.0,183.0 586.0,186.5" fill="none" stroke="#ffffff" stroke-width="4.0" stroke-linecap="butt" stroke-linejoin="round" /><polyline points="358.0,136.0 358.0,187.0" fill="none" stroke="#ffffff" stroke-width="2.6" stroke-linecap="butt" stroke-linejoin="round" /><polyline points="220.6,94.0 220.6,104.0" fill="none" stroke="#f08a80" stroke-width="1.4" stroke-linecap="butt" stroke-linejoin="round" stroke-dasharray="1 1"/><polyline points="268.3,97.0 268.3,103.0" fill="none" stroke="#f08a80" stroke-width="1.4" stroke-linecap="butt" stroke-linejoin="round" stroke-dasharray="1 1"/><polyline points="277.5,119.3 288.0,119.3" fill="none" stroke="#f08a80" stroke-width="1.4" stroke-linecap="butt" stroke-linejoin="round" stroke-dasharray="1 1"/><polyline points="186.0,104.0 190.0,122.0 193.0,135.0" fill="none" stroke="#f08a80" stroke-width="1.4" stroke-linecap="butt" stroke-linejoin="round" stroke-dasharray="1 1"/><polyline points="247.0,137.0 247.0,152.0 261.0,152.0" fill="none" stroke="#f08a80" stroke-width="1.4" stroke-linecap="butt" stroke-linejoin="round" stroke-dasharray="1 1"/><polyline points="271.0,79.0 284.0,91.0" fill="none" stroke="#f08a80" stroke-width="1.4" stroke-linecap="butt" stroke-linejoin="round" stroke-dasharray="1 1"/><polyline points="321.0,-2.0 321.0,75.0 320.0,100.0 318.0,120.0 317.5,145.0 318.5,160.0 323.0,172.0 334.0,190.0" fill="none" stroke="#c9cc8a" stroke-width="8.3" stroke-linecap="butt" stroke-linejoin="round" /><polyline points="319.0,119.5 333.0,119.3 343.0,124.0 352.8,132.4 392.0,132.5 460.0,136.8 486.8,138.3 586.0,144.6" fill="none" stroke="#c9cc8a" stroke-width="7.1000000000000005" stroke-linecap="butt" stroke-linejoin="round" /><polyline points="321.0,-2.0 321.0,75.0 320.0,100.0 318.0,120.0 317.5,145.0 318.5,160.0 323.0,172.0 334.0,190.0" fill="none" stroke="#f7fabf" stroke-width="7.4" stroke-linecap="butt" stroke-linejoin="round" /><polyline points="319.0,119.5 333.0,119.3 343.0,124.0 352.8,132.4 392.0,132.5 460.0,136.8 486.8,138.3 586.0,144.6" fill="none" stroke="#f7fabf" stroke-width="6.2" stroke-linecap="butt" stroke-linejoin="round" /><path d="M236-3C210 25 178 58 168.800 74.800 160.500 90 163 96 167 103S176.500 119 179.500 125 186 139 188.300 146 192.500 164 193.300 171.600 193.500 182 193.500 190" fill="none" stroke="#c99a55" stroke-width="11.600"/><path d="M236-3C210 25 178 58 168.800 74.800 160.500 90 163 96 167 103S176.500 119 179.500 125 186 139 188.300 146 192.500 164 193.300 171.600 193.500 182 193.500 190" fill="none" stroke="#fcd6a4" stroke-width="10.400"/><polyline points="228.0,-3.0 312.0,-3.0" fill="none" stroke="#fcd6a4" stroke-width="9" stroke-linecap="butt" stroke-linejoin="round" /><path d="M0 0H226C204 24 178 52 163 74.800 154 88 156 95 160 103L164.400 106.200 178 132l0 8-16.200 18.500-5.800 7.900-4 20.600H0z" fill="#aad3df"/><path d="M0 84.800 141 90.400c8 0 14-8 23-30" fill="none" stroke="#a589b5" stroke-width="1.500" stroke-dasharray="7 3" opacity=".8"/><path d="M132.600 0C134 12 137 50 139 71.700s5 17 7.500 20l14 13" fill="none" stroke="#7d92e6" stroke-width=".9" stroke-dasharray="4.500 4"/><path d="M0 26 163 13.700" fill="none" stroke="#bcdde5" stroke-width=".7" stroke-dasharray="6 3" opacity=".6"/><text transform="translate(0.0 96.3) rotate(1.5)" font-family="DejaVu Sans, sans-serif" font-size="7" fill="#9c7fae" textLength="112.0" lengthAdjust="spacingAndGlyphs">Geográfica Imediata de São Luís</text><g transform="translate(162.2 106.2)" fill="none" stroke="#8461c4" stroke-width="1.100" stroke-linecap="round"><circle cx="0" cy="-3.800" r="1"/><path d="M0-2.800v7.600M-2.200-1.200h4.400M-4 1.800c.5 2.200 2 3.100 4 3.100s3.500-.9 4-3.100"/></g><g transform="translate(176.2 96.8) scale(1.0)" fill="#734a08"><path d="M-4.6-1.700 0-4.700 4.600-1.700v.9h-9.200z"/><rect x="-3.700" y="-.4" width="1.500" height="3.500"/><rect x="-.75" y="-.4" width="1.500" height="3.500"/><rect x="2.200" y="-.4" width="1.500" height="3.500"/><rect x="-4.700" y="3.300" width="9.400" height="1.300"/></g><g transform="translate(192.5 106.6) scale(1.0)" fill="#734a08"><path d="M-4.6-1.700 0-4.700 4.600-1.700v.9h-9.200z"/><rect x="-3.700" y="-.4" width="1.500" height="3.500"/><rect x="-.75" y="-.4" width="1.500" height="3.500"/><rect x="2.200" y="-.4" width="1.500" height="3.500"/><rect x="-4.700" y="3.300" width="9.400" height="1.300"/></g><g transform="translate(203.9 111.5) scale(1.0)" fill="#734a08"><path d="M-4.6-1.700 0-4.700 4.600-1.700v.9h-9.200z"/><rect x="-3.700" y="-.4" width="1.500" height="3.500"/><rect x="-.75" y="-.4" width="1.500" height="3.500"/><rect x="2.200" y="-.4" width="1.500" height="3.500"/><rect x="-4.700" y="3.300" width="9.400" height="1.300"/></g><g transform="translate(239.3 106.9) scale(1.0)" fill="#734a08"><path d="M-4.6-1.700 0-4.700 4.600-1.700v.9h-9.200z"/><rect x="-3.700" y="-.4" width="1.500" height="3.500"/><rect x="-.75" y="-.4" width="1.500" height="3.500"/><rect x="2.200" y="-.4" width="1.500" height="3.500"/><rect x="-4.700" y="3.300" width="9.400" height="1.300"/></g><g transform="translate(272.3 115.4) scale(1.0)" fill="#734a08"><path d="M-4.6-1.700 0-4.700 4.600-1.700v.9h-9.200z"/><rect x="-3.700" y="-.4" width="1.500" height="3.500"/><rect x="-.75" y="-.4" width="1.500" height="3.500"/><rect x="2.200" y="-.4" width="1.500" height="3.500"/><rect x="-4.700" y="3.300" width="9.400" height="1.300"/></g><g transform="translate(270.0 146.8) scale(1.0)" fill="#734a08"><path d="M-4.6-1.700 0-4.700 4.600-1.700v.9h-9.200z"/><rect x="-3.700" y="-.4" width="1.500" height="3.500"/><rect x="-.75" y="-.4" width="1.500" height="3.500"/><rect x="2.200" y="-.4" width="1.500" height="3.500"/><rect x="-4.700" y="3.300" width="9.400" height="1.300"/></g><g transform="translate(270.0 161.8) scale(1.0)" fill="#734a08"><path d="M-4.6-1.700 0-4.700 4.600-1.700v.9h-9.200z"/><rect x="-3.700" y="-.4" width="1.500" height="3.500"/><rect x="-.75" y="-.4" width="1.500" height="3.500"/><rect x="2.200" y="-.4" width="1.500" height="3.500"/><rect x="-4.700" y="3.300" width="9.400" height="1.300"/></g><g transform="translate(418.2 111.5) scale(1.0)" fill="#734a08"><path d="M-4.6-1.700 0-4.700 4.600-1.700v.9h-9.200z"/><rect x="-3.700" y="-.4" width="1.500" height="3.500"/><rect x="-.75" y="-.4" width="1.500" height="3.500"/><rect x="2.200" y="-.4" width="1.500" height="3.500"/><rect x="-4.700" y="3.300" width="9.400" height="1.300"/></g><g transform="translate(208.5 131.3)"><path d="M-5.200-3.600h5v3.800c0 1.700-1.100 2.700-2.500 3.100-1.400-.4-2.500-1.400-2.500-3.100z" fill="#f1eee8" stroke="#734a08" stroke-width=".8"/><path d="M-1.200-1.200h5.600v4.100c0 1.900-1.300 3-2.800 3.400-1.500-.4-2.800-1.500-2.800-3.400z" fill="#734a08"/><circle cx=".5" cy="1" r=".6" fill="#f1eee8"/><circle cx="2.700" cy="1" r=".6" fill="#f1eee8"/><path d="M.3 3.600q1.300 1.200 2.600 0" stroke="#f1eee8" stroke-width=".6" fill="none"/></g><g transform="translate(251.3 150.0)"><path d="M-5.200-3.600h5v3.800c0 1.700-1.100 2.700-2.500 3.100-1.400-.4-2.500-1.400-2.500-3.100z" fill="#f1eee8" stroke="#734a08" stroke-width=".8"/><path d="M-1.200-1.200h5.600v4.100c0 1.900-1.300 3-2.800 3.400-1.500-.4-2.800-1.500-2.800-3.400z" fill="#734a08"/><circle cx=".5" cy="1" r=".6" fill="#f1eee8"/><circle cx="2.700" cy="1" r=".6" fill="#f1eee8"/><path d="M.3 3.600q1.300 1.200 2.600 0" stroke="#f1eee8" stroke-width=".6" fill="none"/></g><g transform="translate(351.5 108.0)"><path d="M-5.200-3.600h5v3.800c0 1.700-1.100 2.700-2.500 3.100-1.400-.4-2.500-1.400-2.500-3.100z" fill="#f1eee8" stroke="#734a08" stroke-width=".8"/><path d="M-1.200-1.200h5.600v4.100c0 1.900-1.300 3-2.800 3.400-1.500-.4-2.800-1.500-2.800-3.400z" fill="#734a08"/><circle cx=".5" cy="1" r=".6" fill="#f1eee8"/><circle cx="2.700" cy="1" r=".6" fill="#f1eee8"/><path d="M.3 3.600q1.300 1.200 2.600 0" stroke="#f1eee8" stroke-width=".6" fill="none"/></g><path transform="translate(279.5 86.6)" d="M0-5.400.9-4.300 1.100 2h1.300v1.200h.9v1.300h-6.600v-1.300h.9v-1.200h1.300l.2-6.300z" fill="#734a08"/><path transform="translate(326.4 105.6)" d="M0-5.400.9-4.300 1.100 2h1.300v1.200h.9v1.300h-6.600v-1.300h.9v-1.200h1.300l.2-6.300z" fill="#734a08"/><path transform="translate(334.5 132.4)" d="M-.8-5.200h1.600v3h3v1.500h-3v6h-1.600v-6h-3v-1.500h3z" fill="#000"/><path transform="translate(443.0 128.5)" d="M-.8-5.200h1.600v3h3v1.500h-3v6h-1.600v-6h-3v-1.500h3z" fill="#000"/><path transform="translate(465.1 32.7)" d="M-.8-5.200h1.600v3h3v1.500h-3v6h-1.600v-6h-3v-1.500h3z" fill="#000"/><path transform="translate(475 26)" d="M-.4-4.800a1.100 1.100 0 1 1 0 2.200 1.100 1.100 0 0 1 0-2.200zM-2.200-1.800h2.600l.2 4.200c1 .1 1.800.4 2.400 1v.9h-5v-.9c.3-.4.600-.6 1-.8l-.2-3.200h-1.700zM-4-1.500l1.800-1" fill="#000" stroke="#000" stroke-width=".4"/><g transform="translate(388.7 157.9)"><rect x="-3.800" y="-1.800" width="7.600" height="6" rx=".6" fill="#ac39ac"/><path d="M-2-1.800v-1.600a2 2 0 0 1 4 0v1.600" fill="none" stroke="#ac39ac" stroke-width="1"/><path d="M-1.300.4h2.600M-1.300 2h2.600" stroke="#f3c9ee" stroke-width=".9"/></g><g transform="translate(529.5 164.0)"><rect x="-3.800" y="-1.800" width="7.600" height="6" rx=".6" fill="#ac39ac"/><path d="M-2-1.800v-1.600a2 2 0 0 1 4 0v1.600" fill="none" stroke="#ac39ac" stroke-width="1"/><path d="M-1.300.4h2.600M-1.300 2h2.600" stroke="#f3c9ee" stroke-width=".9"/></g><circle cx="565.400" cy="1.500" r="5" fill="#bf0000"/><path d="M562.400 1.500h6M565.400-1.500v6" stroke="#fff" stroke-width="1.500"/><rect x="574.300" y="27.800" width="4" height="4" fill="#0092da"/><rect x="584.800" y="101" width="1.200" height="4.500" fill="#0092da"/><path transform="translate(442.0 9.0) rotate(185)" d="M-2.5 0H2.5M0.7-1.300 2.5 0 0.7 1.300" fill="none" stroke="#555" stroke-width=".7" stroke-linecap="round" stroke-linejoin="round"/><path transform="translate(558.0 11.0) rotate(8)" d="M-2.5 0H2.5M0.7-1.300 2.5 0 0.7 1.300" fill="none" stroke="#555" stroke-width=".7" stroke-linecap="round" stroke-linejoin="round"/><path transform="translate(435.0 57.0) rotate(-90)" d="M-2.5 0H2.5M0.7-1.300 2.5 0 0.7 1.300" fill="none" stroke="#555" stroke-width=".7" stroke-linecap="round" stroke-linejoin="round"/><path transform="translate(512.0 63.0) rotate(188)" d="M-2.5 0H2.5M0.7-1.300 2.5 0 0.7 1.300" fill="none" stroke="#555" stroke-width=".7" stroke-linecap="round" stroke-linejoin="round"/><path transform="translate(482.0 68.0) rotate(-90)" d="M-2.5 0H2.5M0.7-1.300 2.5 0 0.7 1.300" fill="none" stroke="#555" stroke-width=".7" stroke-linecap="round" stroke-linejoin="round"/><path transform="translate(426.0 76.2) rotate(0)" d="M-2.5 0H2.5M0.7-1.300 2.5 0 0.7 1.300" fill="none" stroke="#555" stroke-width=".7" stroke-linecap="round" stroke-linejoin="round"/><path transform="translate(560.0 83.5) rotate(3)" d="M-2.5 0H2.5M0.7-1.300 2.5 0 0.7 1.300" fill="none" stroke="#555" stroke-width=".7" stroke-linecap="round" stroke-linejoin="round"/><path transform="translate(475.0 103.5) rotate(181)" d="M-2.5 0H2.5M0.7-1.300 2.5 0 0.7 1.300" fill="none" stroke="#555" stroke-width=".7" stroke-linecap="round" stroke-linejoin="round"/><path transform="translate(543.0 54.0) rotate(92)" d="M-2.5 0H2.5M0.7-1.300 2.5 0 0.7 1.300" fill="none" stroke="#555" stroke-width=".7" stroke-linecap="round" stroke-linejoin="round"/><path transform="translate(576.5 19.0) rotate(-88)" d="M-2.5 0H2.5M0.7-1.300 2.5 0 0.7 1.300" fill="none" stroke="#555" stroke-width=".7" stroke-linecap="round" stroke-linejoin="round"/><path transform="translate(565.0 34.0) rotate(5)" d="M-2.5 0H2.5M0.7-1.300 2.5 0 0.7 1.300" fill="none" stroke="#555" stroke-width=".7" stroke-linecap="round" stroke-linejoin="round"/><path transform="translate(453.0 126.0) rotate(90)" d="M-2.5 0H2.5M0.7-1.300 2.5 0 0.7 1.300" fill="none" stroke="#555" stroke-width=".7" stroke-linecap="round" stroke-linejoin="round"/><path transform="translate(524.0 142.0) rotate(184)" d="M-2.5 0H2.5M0.7-1.300 2.5 0 0.7 1.300" fill="none" stroke="#555" stroke-width=".7" stroke-linecap="round" stroke-linejoin="round"/><path transform="translate(168.0 91.5) rotate(-122)" d="M-2.5 0H2.5M0.7-1.300 2.5 0 0.7 1.300" fill="none" stroke="#555" stroke-width=".7" stroke-linecap="round" stroke-linejoin="round"/><path transform="translate(187.0 146.0) rotate(70)" d="M-2.5 0H2.5M0.7-1.300 2.5 0 0.7 1.300" fill="none" stroke="#555" stroke-width=".7" stroke-linecap="round" stroke-linejoin="round"/><text transform="translate(246.8 95.6) rotate(0.8)" font-family="DejaVu Sans, sans-serif" font-size="6.2" fill="#2e2e2e" textLength="44.2" lengthAdjust="spacingAndGlyphs" stroke="#fff" stroke-opacity=".85" stroke-width="1.6" paint-order="stroke" stroke-linejoin="round">Rua de Nazaré</text><text transform="translate(241.2 118.0) rotate(90.0)" font-family="DejaVu Sans, sans-serif" font-size="6.2" fill="#2e2e2e" textLength="44.5" lengthAdjust="spacingAndGlyphs" stroke="#fff" stroke-opacity=".85" stroke-width="1.6" paint-order="stroke" stroke-linejoin="round">Rua da Estrela</text><text transform="translate(211.5 175.5) rotate(0.0)" font-family="DejaVu Sans, sans-serif" font-size="8.6" fill="#8a8a8a" textLength="54.9" lengthAdjust="spacingAndGlyphs" stroke="#fff" stroke-opacity=".85" stroke-width="1.6" paint-order="stroke" stroke-linejoin="round">Praia Grande</text><text transform="translate(164.2 187.0) rotate(-90.0)" font-family="DejaVu Sans, sans-serif" font-size="6.2" fill="#2e2e2e" textLength="14.5" lengthAdjust="spacingAndGlyphs" stroke="#fff" stroke-opacity=".85" stroke-width="1.6" paint-order="stroke" stroke-linejoin="round">Plat.</text><text transform="translate(319.2 186.0) rotate(-90.0)" font-family="DejaVu Sans, sans-serif" font-size="6.2" fill="#2e2e2e" textLength="16.0" lengthAdjust="spacingAndGlyphs" stroke="#fff" stroke-opacity=".85" stroke-width="1.6" paint-order="stroke" stroke-linejoin="round">Pena</text><text transform="translate(346.2 160.8) rotate(2.8)" font-family="DejaVu Sans, sans-serif" font-size="6.2" fill="#2e2e2e" textLength="37.3" lengthAdjust="spacingAndGlyphs" stroke="#fff" stroke-opacity=".85" stroke-width="1.6" paint-order="stroke" stroke-linejoin="round">Rua Grande</text><text transform="translate(480.0 167.2) rotate(2.5)" font-family="DejaVu Sans, sans-serif" font-size="6.2" fill="#2e2e2e" textLength="36.3" lengthAdjust="spacingAndGlyphs" stroke="#fff" stroke-opacity=".85" stroke-width="1.6" paint-order="stroke" stroke-linejoin="round">Rua Grande</text><text transform="translate(430.0 105.3) rotate(0.5)" font-family="DejaVu Sans, sans-serif" font-size="6.2" fill="#2e2e2e" textLength="33.7" lengthAdjust="spacingAndGlyphs" stroke="#fff" stroke-opacity=".85" stroke-width="1.6" paint-order="stroke" stroke-linejoin="round">Rua do Sol</text><text transform="translate(434.3 49.0) rotate(-90.0)" font-family="DejaVu Sans, sans-serif" font-size="6.2" fill="#2e2e2e" textLength="41.0" lengthAdjust="spacingAndGlyphs" stroke="#fff" stroke-opacity=".85" stroke-width="1.6" paint-order="stroke" stroke-linejoin="round">Rua São João</text><text transform="translate(431.6 190.0) rotate(-90.0)" font-family="DejaVu Sans, sans-serif" font-size="6.2" fill="#2e2e2e" textLength="48.5" lengthAdjust="spacingAndGlyphs" stroke="#fff" stroke-opacity=".85" stroke-width="1.6" paint-order="stroke" stroke-linejoin="round">Rua São João</text><text transform="translate(457.2 27.0) rotate(-83.5)" font-family="DejaVu Sans, sans-serif" font-size="6.2" fill="#2e2e2e" textLength="29.2" lengthAdjust="spacingAndGlyphs" stroke="#fff" stroke-opacity=".85" stroke-width="1.6" paint-order="stroke" stroke-linejoin="round">Beco do</text><text transform="translate(461.2 6.5) rotate(18.5)" font-family="DejaVu Sans, sans-serif" font-size="6.2" fill="#2e2e2e" textLength="47.6" lengthAdjust="spacingAndGlyphs" stroke="#fff" stroke-opacity=".85" stroke-width="1.6" paint-order="stroke" stroke-linejoin="round">Rua do Rancho</text><text transform="translate(488.0 -0.5) rotate(12.0)" font-family="DejaVu Sans, sans-serif" font-size="6.2" fill="#2e2e2e" textLength="67.5" lengthAdjust="spacingAndGlyphs" stroke="#fff" stroke-opacity=".85" stroke-width="1.6" paint-order="stroke" stroke-linejoin="round">Rua Jansen Muller</text><text transform="translate(448.8 57.6) rotate(9.5)" font-family="DejaVu Sans, sans-serif" font-size="6.2" fill="#2e2e2e" textLength="47.7" lengthAdjust="spacingAndGlyphs" stroke="#fff" stroke-opacity=".85" stroke-width="1.6" paint-order="stroke" stroke-linejoin="round">Rua do Alecrim</text><text transform="translate(437.7 80.0) rotate(4.2)" font-family="DejaVu Sans, sans-serif" font-size="6.2" fill="#2e2e2e" textLength="57.0" lengthAdjust="spacingAndGlyphs" stroke="#fff" stroke-opacity=".85" stroke-width="1.6" paint-order="stroke" stroke-linejoin="round">Rua dos Afogados</text><text transform="translate(519.5 68.7) rotate(-75.5)" font-family="DejaVu Sans, sans-serif" font-size="6.2" fill="#2e2e2e" textLength="56.1" lengthAdjust="spacingAndGlyphs" stroke="#fff" stroke-opacity=".85" stroke-width="1.6" paint-order="stroke" stroke-linejoin="round">Rua do Pespontão</text><text transform="translate(503.8 135.5) rotate(-89.6)" font-family="DejaVu Sans, sans-serif" font-size="6.2" fill="#2e2e2e" textLength="68.5" lengthAdjust="spacingAndGlyphs" stroke="#fff" stroke-opacity=".85" stroke-width="1.6" paint-order="stroke" stroke-linejoin="round">Rua das Mangueiras</text><text transform="translate(481.2 148.0) rotate(-89.2)" font-family="DejaVu Sans, sans-serif" font-size="6.2" fill="#2e2e2e" textLength="59.0" lengthAdjust="spacingAndGlyphs" stroke="#fff" stroke-opacity=".85" stroke-width="1.6" paint-order="stroke" stroke-linejoin="round">Rua dos Cavaleiros</text><text transform="translate(550.0 120.0) rotate(-87.1)" font-family="DejaVu Sans, sans-serif" font-size="6.2" fill="#2e2e2e" textLength="60.1" lengthAdjust="spacingAndGlyphs" stroke="#fff" stroke-opacity=".85" stroke-width="1.6" paint-order="stroke" stroke-linejoin="round">Rua de Santaninha</text><text transform="translate(574.5 81.0) rotate(-85.1)" font-family="DejaVu Sans, sans-serif" font-size="6.2" fill="#2e2e2e" textLength="46.6" lengthAdjust="spacingAndGlyphs" stroke="#fff" stroke-opacity=".85" stroke-width="1.6" paint-order="stroke" stroke-linejoin="round">Rua Rio Branco</text><text transform="translate(424.0 7.0) rotate(12.5)" font-family="DejaVu Sans, sans-serif" font-size="6.2" fill="#2e2e2e" textLength="9.2" lengthAdjust="spacingAndGlyphs" stroke="#fff" stroke-opacity=".85" stroke-width="1.6" paint-order="stroke" stroke-linejoin="round">dra</text><text transform="translate(360.6 135.3) rotate(0.9)" font-family="DejaVu Sans, sans-serif" font-size="6.2" fill="#2e2e2e" textLength="38.6" lengthAdjust="spacingAndGlyphs" stroke="#fff" stroke-opacity=".85" stroke-width="1.6" paint-order="stroke" stroke-linejoin="round">Rua da Paz</text><text transform="translate(480.5 140.6) rotate(4.6)" font-family="DejaVu Sans, sans-serif" font-size="6.2" fill="#2e2e2e" textLength="37.6" lengthAdjust="spacingAndGlyphs" stroke="#fff" stroke-opacity=".85" stroke-width="1.6" paint-order="stroke" stroke-linejoin="round">Rua da Paz</text></svg><svg class="a" style="left:284px;top:79px;width:34px;height:32px;overflow:visible" viewBox="0 0 34 32" aria-hidden="true"><defs><filter id="mb" x="-30%" y="-30%" width="160%" height="160%"><feGaussianBlur stdDeviation="1.300"/></filter><linearGradient id="mg" x1="0" y1="0" x2="0" y2="1"><stop offset="0" stop-color="#3b94d6"/><stop offset="1" stop-color="#226fb3"/></linearGradient></defs><path d="M10 31 15 23C18 18.500 24 15.500 28 16.500s2 4.500-2 7c-5 3-11 4.500-16 7.500z" fill="#000" opacity=".2" filter="url(#mb)"/><g transform="translate(.4 .4) scale(.75)"><path d="M12.500.700C6 .700.700 6 .700 12.500c0 2.300.900 5 2.300 7.600l8.600 19.400c.4.900 1.500.900 1.900 0l8.600-19.400c1.400-2.600 2.300-5.300 2.300-7.600C24.400 6 19 .700 12.500.700z" fill="url(#mg)" stroke="#2a6ea8" stroke-width="1"/><circle cx="12.500" cy="12.400" r="4.300" fill="#fff"/></g></svg><div class="a popup" style="left:164px;top:3.600px;width:260.200px;height:71.600px;background:#fff;border-radius:9px;box-shadow:0 2.200px 10.500px rgba(0,0,0,.4)"></div><svg class="a" style="left:279px;top:74.800px;width:30px;height:10px" viewBox="0 0 30 10" aria-hidden="true"><path d="M5.500 0 15 8.600 24.500 0z" fill="#fff"/></svg><span class="a t" style="left:179.9px;top:13.92px;font-size:9.75px;line-height:13px;font-weight:700;letter-spacing:-0.06px;color:#333;">01414534000127</span><span class="a t" style="left:179.9px;top:27.12px;font-size:9.75px;line-height:13px;letter-spacing:-0.04px;color:#333;">Ocasarão Restaurante</span><span class="a t" style="left:179.9px;top:39.02px;font-size:9.75px;line-height:13px;font-style:italic;color:#333;">RUA DO PASSEIO 124, Bairro: CENTRO, SAO</span><span class="a t" style="left:179.9px;top:51.92px;font-size:9.75px;line-height:13px;font-style:italic;letter-spacing:-0.07px;color:#333;">LUIS/MA</span><span class="a t" style="left:411.25px;top:7.92px;font-size:13.5px;line-height:14px;color:#757575;">×</span><div class="a" style="left:8.400px;top:7.700px;width:23.200px;height:45.800px;background:#fff;border-radius:3px;box-shadow:0 0 0 1.300px rgba(0,0,0,.07)"></div><div class="a" style="left:8.300px;top:30px;width:23.400px;height:1px;background:#ccc"></div><span class="a t" style="left:14.94px;top:9.66px;font-size:18px;line-height:20px;color:#000;-webkit-text-stroke:.2px #000">+</span><span class="a t" style="left:15.14px;top:32.76px;font-size:18px;line-height:20px;color:#000;">−</span><div class="a" style="left:410.300px;top:175px;width:175.700px;height:12px;background:rgba(255,255,255,.8)"></div><svg class="a" style="left:414px;top:178.300px;width:9px;height:6px" viewBox="0 0 12 8" aria-hidden="true"><path fill="#4c7be1" d="M0 0h12v4H0z"/><path fill="#ffd500" d="M0 4h12v3H0z"/><path fill="#e0bc00" d="M0 7h12v1H0z"/></svg><a class="a t" href="#" style="left:425.5px;top:175.08px;font-size:9px;line-height:12px;letter-spacing:0.01px;color:#0078a8;text-decoration:none">Leaflet</a><span class="a t" style="left:455.3px;top:175.08px;font-size:9px;line-height:12px;letter-spacing:0.11px;color:#333;">| ©</span><a class="a t" href="#" style="left:469px;top:175.08px;font-size:9px;line-height:12px;letter-spacing:-0.05px;color:#0078a8;text-decoration:none">OpenStreetMap</a><span class="a t" style="left:535px;top:175.08px;font-size:9px;line-height:12px;letter-spacing:-0.03px;color:#333;">contributors</span></div>
<div class="a " style="left:0px;top:218.5px;width:586px;height:32px;background:#f7f7f7;border-top:1px solid #dcdcdc"></div>
<span class="a t" style="left:12.5px;top:228.27px;font-size:10.2px;line-height:15px;font-weight:700;letter-spacing:-0.12px;color:#3a3a3a;">Coordenadas:</span>
<span class="a t" style="left:82.5px;top:228.27px;font-size:10.2px;line-height:15px;letter-spacing:-0.01px;color:#444;">-2,529128, -44,304154</span>
</section>
<section class="a card" style="left:1240px;top:471.4px;width:586px;height:224.6px">
<div class="a card-header" style="height:31.6px"></div>
<svg class="a ic" style="left:12.5px;top:8.6px;width:14.5px;height:14.5px;fill:#3a3a3a;stroke:#3a3a3a;stroke-width:.3" viewBox="0 0 16 16" aria-hidden="true"><path d="M1 0 0 1l2.2 3.081a1 1 0 0 0 .815.419h.07a1 1 0 0 1 .708.293l2.675 2.675-2.617 2.654A3.003 3.003 0 0 0 0 13a3 3 0 1 0 5.878-.851l2.654-2.617.968.968-.305.914a1 1 0 0 0 .242 1.023l3.27 3.27a.997.997 0 0 0 1.414 0l1.586-1.586a.997.997 0 0 0 0-1.414l-3.27-3.27a1 1 0 0 0-1.023-.242L10.5 9.5l-.96-.96 2.68-2.643A3.005 3.005 0 0 0 16 3q0-.405-.102-.777l-2.14 2.141L12 4l-.364-1.757L13.777.102a3 3 0 0 0-3.675 3.68L7.462 6.46 4.793 3.793a1 1 0 0 1-.293-.707v-.071a1 1 0 0 0-.419-.814zm9.646 10.646a.5.5 0 0 1 .708 0l2.914 2.915a.5.5 0 0 1-.707.707l-2.915-2.914a.5.5 0 0 1 0-.708M3 11l.471.242.529.026.287.445.445.287.026.529L5 13l-.242.471-.026.529-.445.287-.287.445-.529.026L3 15l-.471-.242L2 14.732l-.287-.445L1.268 14l-.026-.529L1 13l.242-.471.026-.529.445-.287.287-.445.529-.026z"/></svg>
<h5 class="a t sb2" style="left:31.75px;top:5.94px;font-size:14.9px;line-height:20px;letter-spacing:-0.35px;color:#3a3a3a;">Ações</h5>
<span class="a btn" style="left:12px;top:43.6px;width:562px;height:29px;background:#ffc107"></span>
<svg class="a ic" style="left:257px;top:53.1px;width:12px;height:12px;fill:#000;stroke:#000;stroke-width:.25" viewBox="0 0 16 16" aria-hidden="true"><path d="M12.146.146a.5.5 0 0 1 .708 0l3 3a.5.5 0 0 1 0 .708l-10 10a.5.5 0 0 1-.168.11l-5 2a.5.5 0 0 1-.65-.65l2-5a.5.5 0 0 1 .11-.168zM11.207 2.5 13.500 4.793 14.793 3.5 12.5 1.207zm1.586 3L10.5 3.207 4 9.707V10h.5a.5.5 0 0 1 .5.5v.5h.5a.5.5 0 0 1 .5.5v.5h.293zm-9.761 5.175-.106.106-1.528 3.821 3.821-1.528.106-.106A.5.5 0 0 1 5 12.5V12h-.5a.5.5 0 0 1-.5-.5V11h-.5a.5.5 0 0 1-.468-.325"/></svg>
<a class="a t sbb" href="#" style="left:272.5px;top:50.01px;font-size:12.1px;line-height:18px;letter-spacing:-0.13px;color:#000;text-decoration:none">Editar Alvo</a>
<span class="a btn" style="left:12px;top:78.6px;width:562px;height:29px;background:#dc3545"></span>
<svg class="a ic" style="left:255px;top:88.1px;width:12px;height:12px;fill:#fff;stroke:#fff;stroke-width:.25" viewBox="0 0 16 16" aria-hidden="true"><path d="M5.5 5.5A.5.5 0 0 1 6 6v6a.5.5 0 0 1-1 0V6a.5.5 0 0 1 .5-.5m2.500 0a.5.5 0 0 1 .5.5v6a.5.5 0 0 1-1 0V6a.5.5 0 0 1 .5-.5m3 .5a.5.5 0 0 0-1 0v6a.5.5 0 0 0 1 0z"/><path d="M14.5 3a1 1 0 0 1-1 1H13v9a2 2 0 0 1-2 2H5a2 2 0 0 1-2-2V4h-.5a1 1 0 0 1-1-1V2a1 1 0 0 1 1-1H6a1 1 0 0 1 1-1h2a1 1 0 0 1 1 1h3.500a1 1 0 0 1 1 1zM4.118 4 4 4.059V13a1 1 0 0 0 1 1h6a1 1 0 0 0 1-1V4.059L11.882 4zM2.500 3h11V2h-11z"/></svg>
<a class="a t sbb" href="#" style="left:270.5px;top:85.01px;font-size:12.1px;line-height:18px;letter-spacing:-0.23px;color:#fff;text-decoration:none">Excluir Alvo</a>
<span class="a btn" style="left:12px;top:113.6px;width:562px;height:29px;background:#0dcaf0"></span>
<svg class="a ic" style="left:238.75px;top:123.1px;width:12px;height:12px;fill:#000;stroke:#000;stroke-width:.25" viewBox="0 0 16 16" aria-hidden="true"><path d="M15 14s1 0 1-1-1-4-5-4-5 3-5 4 1 1 1 1zm-7.978-1L7 12.996c.001-.264.167-1.03.76-1.72C8.312 10.629 9.282 10 11 10c1.717 0 2.687.63 3.24 1.276.593.69.758 1.457.76 1.72l-.008.002-.014.002zM11 7a2 2 0 1 0 0-4 2 2 0 0 0 0 4m3-2a3 3 0 1 1-6 0 3 3 0 0 1 6 0M6.936 9.28a6 6 0 0 0-1.23-.247A7 7 0 0 0 5 9c-4 0-5 3-5 4q0 1 1 1h4.216A2.24 2.24 0 0 1 5 13c0-1.01.377-2.042 1.09-2.904.243-.294.526-.569.846-.816M4.92 10A5.5 5.5 0 0 0 4 13H1c0-.26.164-1.03.76-1.724.545-.636 1.492-1.256 3.16-1.275ZM1.5 5.5a3 3 0 1 1 6 0 3 3 0 0 1-6 0m3-2a2 2 0 1 0 0 4 2 2 0 0 0 0-4"/></svg>
<a class="a t sbb" href="#" style="left:254.5px;top:120.01px;font-size:12.1px;line-height:18px;letter-spacing:-0.37px;color:#000;text-decoration:none">Associar à Equipe</a>
<span class="a btn" style="left:12px;top:148.6px;width:562px;height:29px;background:#fff;border:1px solid #dc3545"></span>
<svg class="a ic" style="left:207px;top:158.1px;width:12px;height:12px;fill:#dc3545;stroke:#dc3545;stroke-width:.25" viewBox="0 0 16 16" aria-hidden="true"><path d="M5.5 5.5A.5.5 0 0 1 6 6v6a.5.5 0 0 1-1 0V6a.5.5 0 0 1 .5-.5m2.500 0a.5.5 0 0 1 .5.5v6a.5.5 0 0 1-1 0V6a.5.5 0 0 1 .5-.5m3 .5a.5.5 0 0 0-1 0v6a.5.5 0 0 0 1 0z"/><path d="M14.5 3a1 1 0 0 1-1 1H13v9a2 2 0 0 1-2 2H5a2 2 0 0 1-2-2V4h-.5a1 1 0 0 1-1-1V2a1 1 0 0 1 1-1H6a1 1 0 0 1 1-1h2a1 1 0 0 1 1 1h3.500a1 1 0 0 1 1 1zM4.118 4 4 4.059V13a1 1 0 0 0 1 1h6a1 1 0 0 0 1-1V4.059L11.882 4zM2.500 3h11V2h-11z"/></svg>
<a class="a t sbb" href="#" style="left:222.5px;top:155.01px;font-size:12.1px;line-height:18px;letter-spacing:-0.2px;color:#dc3545;text-decoration:none">Excluir Formulário Preenchido</a>
<span class="a btn" style="left:12px;top:183.6px;width:562px;height:29px;background:#fff;border:1px solid #6c757d"></span>
<svg class="a ic" style="left:251px;top:193.1px;width:12px;height:12px;fill:#6c757d;stroke:#6c757d;stroke-width:.25" viewBox="0 0 16 16" aria-hidden="true"><path fill-rule="evenodd" d="M15 8a.5.5 0 0 0-.5-.5H2.707l3.147-3.146a.5.5 0 1 0-.708-.708l-4 4a.5.5 0 0 0 0 .708l4 4a.5.5 0 0 0 .708-.708L2.707 8.500H14.500A.5.5 0 0 0 15 8"/></svg>
<a class="a t sbb" href="#" style="left:267.5px;top:190.01px;font-size:12.1px;line-height:18px;letter-spacing:-0.26px;color:#6c757d;text-decoration:none">Voltar à Lista</a>
</section>
<section class="a card" style="left:1240px;top:716px;width:586px;height:240px">
<div class="a card-header" style="height:31px"></div>
<svg class="a ic" style="left:12.5px;top:8px;width:14.5px;height:14.5px;fill:#3a3a3a;stroke:#3a3a3a;stroke-width:.3" viewBox="0 0 16 16" aria-hidden="true"><path d="M10.854 6.146a.5.5 0 0 1 0 .708l-3 3a.5.5 0 0 1-.708 0l-1.500-1.500a.5.5 0 1 1 .708-.708L7.500 8.793l2.646-2.647a.5.5 0 0 1 .708 0"/><path d="M4 0a2 2 0 0 0-2 2v12a2 2 0 0 0 2 2h8a2 2 0 0 0 2-2V2a2 2 0 0 0-2-2zm0 1h8a1 1 0 0 1 1 1v12a1 1 0 0 1-1 1H4a1 1 0 0 1-1-1V2a1 1 0 0 1 1-1"/></svg>
<h5 class="a t sb2" style="left:31.75px;top:5.84px;font-size:14.9px;line-height:20px;letter-spacing:-0.09px;color:#3a3a3a;">Anotações de Responsabilidade Técnica (ARTs)</h5>
<span class="a t" style="left:13px;top:42.47px;font-size:10.2px;line-height:15px;font-weight:700;letter-spacing:0.04px;color:#3a3a3a;">Total encontrado:</span>
<span class="a t" style="left:101.6px;top:42.53px;font-size:10px;line-height:15px;letter-spacing:-0.13px;color:#444;">3 ART(s)</span>
<div class="a " style="left:12.5px;top:71.5px;width:561.25px;height:160px;border:1px solid #dde1e6;border-radius:4px;background:#fff"></div>
<div class="a " style="left:12.5px;top:71.5px;width:561.25px;height:55.25px;background:#cfe2ff;border-radius:4px 4px 0 0"></div>
<span class="a t" style="left:28.75px;top:82.31px;font-size:12.1px;line-height:18px;font-weight:700;letter-spacing:0.18px;color:#052c65;">MA20220540617</span>
<span class="a badge" style="left:28px;top:101px;width:30px;height:14px;background:#0dcaf0"></span><span class="a t" style="left:33.75px;top:101.11px;font-size:8.2px;line-height:14px;font-weight:700;letter-spacing:-0.38px;color:#fff;">Ativa</span>
<svg class="a" style="left:544px;top:95px;width:13px;height:9px" viewBox="0 0 13 9" aria-hidden="true"><path d="M1 7.700 6.500 2.200 12 7.700" fill="none" stroke="#1c4a86" stroke-width="1.050" stroke-linecap="round" stroke-linejoin="round"/></svg>
<span class="a t lbl sb1" style="left:25.75px;top:133.81px;font-size:12.1px;line-height:18px;letter-spacing:-0.06px;">Número da ART</span>
<span class="a t" style="left:25.75px;top:154.81px;font-size:12.1px;line-height:18px;letter-spacing:-0.32px;">MA20220540617</span>
<span class="a t lbl sb1" style="left:299.25px;top:133.81px;font-size:12.1px;line-height:18px;letter-spacing:-0.19px;">Situação</span>
<span class="a badge" style="left:299px;top:157px;width:32.75px;height:15px;background:#0dcaf0"></span><span class="a t" style="left:305px;top:157.12px;font-size:9px;line-height:15px;font-weight:700;letter-spacing:-0.32px;color:#fff;">Ativa</span>
<span class="a t lbl sb1" style="left:25.75px;top:190.56px;font-size:12.1px;line-height:18px;letter-spacing:-0.15px;">Data de Criação</span>
<span class="a t lbl sb1" style="left:299.25px;top:190.56px;font-size:12.1px;line-height:18px;letter-spacing:-0.05px;">Data de Pagamento</span>
</section>
</main>
<div class="a scrollbar"></div><div class="a thumb"></div><div class="a" style="left:0;top:923px;width:1.5px;height:2px;background:#45484d;border-radius:0 1px 0 0"></div>
</body>
</html>
